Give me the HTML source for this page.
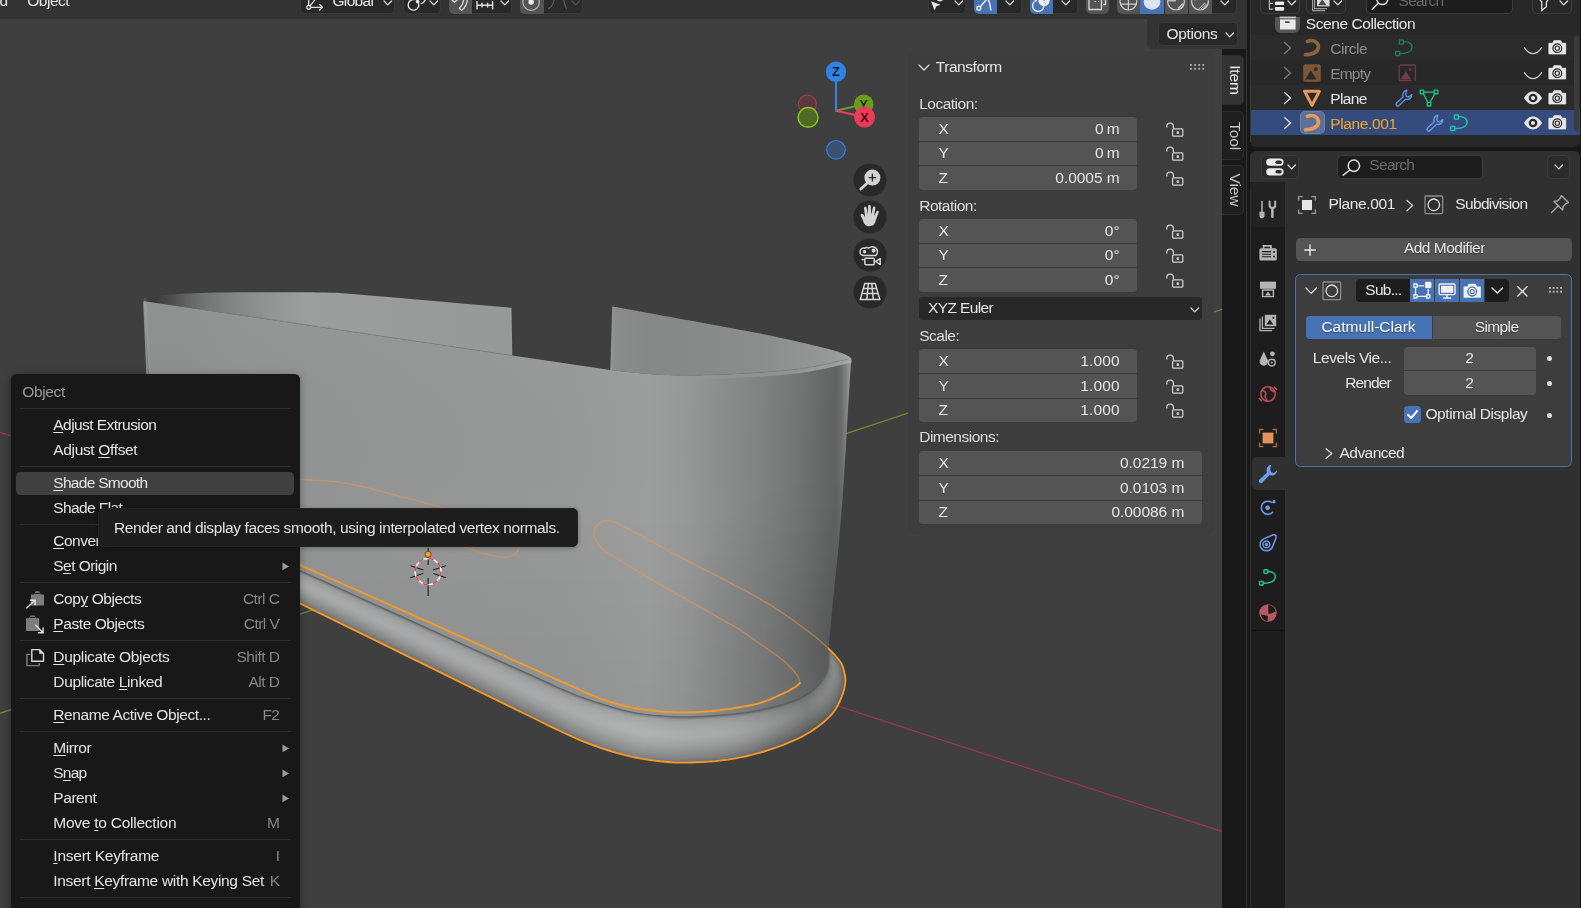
<!DOCTYPE html>
<html lang="en">
<head>
<meta charset="utf-8">
<title>Blender</title>
<style>
*{box-sizing:border-box;margin:0;padding:0}
html,body{width:1581px;height:908px;overflow:hidden;background:#181818}
body{position:relative;font-family:"Liberation Sans",sans-serif;font-size:15.5px;color:#e6e6e6;line-height:0}
.a{position:absolute;display:block}
.t{position:absolute;white-space:nowrap;line-height:0}
#all{position:absolute;left:0;top:0;width:1581px;height:908px;will-change:transform}
u{text-decoration:underline;text-underline-offset:1.5px;text-decoration-thickness:1px}
#vp{position:absolute;left:0;top:0;width:1222px;height:908px;background:#3f3f3f;overflow:hidden}
#scene{position:absolute;left:0;top:0}
</style>
</head>
<body>
<div id="all">
<div id="vp">
<svg id="scene" width="1222" height="908" viewBox="0 0 1222 908">
<defs>
<linearGradient id="gw" gradientUnits="userSpaceOnUse" x1="143" y1="0" x2="852" y2="0">

<stop offset="0.0000" stop-color="#8d8f8f"/>
<stop offset="0.0663" stop-color="#8d8f8f"/>
<stop offset="0.1509" stop-color="#919393"/>
<stop offset="0.3625" stop-color="#949696"/>
<stop offset="0.5882" stop-color="#979999"/>
<stop offset="0.7123" stop-color="#9d9f9f"/>
<stop offset="0.7645" stop-color="#979999"/>
<stop offset="0.8209" stop-color="#8b8d8d"/>
<stop offset="0.8773" stop-color="#7f8181"/>
<stop offset="0.9267" stop-color="#727474"/>
<stop offset="0.9633" stop-color="#646666"/>
<stop offset="0.9774" stop-color="#606262"/>
<stop offset="0.9859" stop-color="#6c6e6e"/>
<stop offset="0.9929" stop-color="#868888"/>
<stop offset="1.0000" stop-color="#a0a2a2"/>
</linearGradient>
<linearGradient id="gbl" gradientUnits="userSpaceOnUse" x1="144" y1="0" x2="512" y2="0">
<stop offset="0.0000" stop-color="#5a5a5a"/>
<stop offset="0.0109" stop-color="#3e3e3e"/>
<stop offset="0.0326" stop-color="#3b3b3b"/>
<stop offset="0.0652" stop-color="#494949"/>
<stop offset="0.1168" stop-color="#626363"/>
<stop offset="0.1685" stop-color="#747676"/>
<stop offset="0.2364" stop-color="#838585"/>
<stop offset="0.3043" stop-color="#8e9090"/>
<stop offset="0.3750" stop-color="#969898"/>
<stop offset="0.4429" stop-color="#9d9f9f"/>
<stop offset="0.5598" stop-color="#9c9e9e"/>
<stop offset="0.7500" stop-color="#999b9b"/>
<stop offset="1.0000" stop-color="#979999"/>
</linearGradient>
<linearGradient id="gbr" gradientUnits="userSpaceOnUse" x1="610" y1="0" x2="852" y2="0">
<stop offset="0.0000" stop-color="#969898"/>
<stop offset="0.0248" stop-color="#8a8c8c"/>
<stop offset="0.1653" stop-color="#868888"/>
<stop offset="0.3719" stop-color="#888a8a"/>
<stop offset="0.6198" stop-color="#8c8e8e"/>
<stop offset="0.8471" stop-color="#939595"/>
<stop offset="0.9504" stop-color="#9c9e9e"/>
<stop offset="0.9959" stop-color="#a6a8a8"/>
</linearGradient>
<linearGradient id="gfl" gradientUnits="userSpaceOnUse" x1="240" y1="0" x2="850" y2="0">
<stop offset="0" stop-color="#fff" stop-opacity="0"/>
<stop offset="0.50" stop-color="#fff" stop-opacity="0"/>
<stop offset="0.66" stop-color="#fff" stop-opacity="0.10"/>
<stop offset="0.75" stop-color="#fff" stop-opacity="0.02"/>
<stop offset="0.84" stop-color="#000" stop-opacity="0.06"/>
<stop offset="0.93" stop-color="#000" stop-opacity="0.25"/>
<stop offset="1" stop-color="#000" stop-opacity="0.15"/>
</linearGradient>
<linearGradient id="gwv" gradientUnits="userSpaceOnUse" x1="0" y1="300" x2="0" y2="720">
<stop offset="0" stop-color="#fff" stop-opacity="0.03"/>
<stop offset="0.5" stop-color="#000" stop-opacity="0"/>
<stop offset="1" stop-color="#000" stop-opacity="0.05"/>
</linearGradient>
<radialGradient id="gwd" gradientUnits="userSpaceOnUse" cx="835" cy="640" r="170">
<stop offset="0" stop-color="#000" stop-opacity="0.09"/>
<stop offset="0.5" stop-color="#000" stop-opacity="0.035"/>
<stop offset="1" stop-color="#000" stop-opacity="0"/>
</radialGradient>
<linearGradient id="grim" gradientUnits="userSpaceOnUse" x1="690" y1="0" x2="852" y2="0">
<stop offset="0" stop-color="#aaacac" stop-opacity="0"/>
<stop offset="0.45" stop-color="#aaacac" stop-opacity="0.35"/>
<stop offset="0.8" stop-color="#aeb0b0" stop-opacity="0.7"/>
<stop offset="1" stop-color="#b0b2b2" stop-opacity="0.8"/>
</linearGradient>
<clipPath id="cf"><path d="M240.0 543.7 L248.2 547.4 L254.4 550.1 L260.6 552.8 L268.8 556.4 L281.2 562.0 L299.9 570.4 L327.9 583.1 L364.3 599.5 L404.8 617.8 L445.4 636.2 L481.8 652.7 L510.0 665.4 L529.2 674.1 L542.7 680.3 L552.1 684.6 L558.9 687.7 L564.9 690.3 L571.7 693.2 L578.6 696.0 L584.3 698.1 L589.0 699.8 L593.4 701.2 L597.7 702.5 L602.5 704.0 L607.6 705.6 L612.8 707.2 L617.9 708.6 L623.0 710.0 L628.2 711.3 L633.3 712.4 L638.5 713.3 L643.8 714.1 L649.2 714.7 L654.4 715.2 L659.4 715.6 L664.1 716.0 L668.3 716.3 L672.0 716.6 L675.6 716.7 L679.1 716.8 L683.0 716.8 L687.3 716.8 L692.2 716.7 L697.6 716.4 L703.2 716.2 L708.9 715.8 L714.6 715.4 L720.0 715.0 L725.2 714.6 L730.2 714.1 L735.2 713.7 L740.1 713.1 L745.1 712.5 L750.0 711.7 L755.0 710.8 L760.2 709.7 L765.3 708.6 L770.4 707.4 L775.1 706.2 L779.5 705.0 L783.5 703.8 L787.2 702.7 L790.7 701.5 L793.9 700.3 L797.0 698.9 L800.0 697.5 L802.9 695.9 L805.6 694.3 L808.2 692.5 L810.6 690.7 L812.9 688.9 L815.0 687.0 L817.0 685.1 L819.0 683.1 L820.8 681.1 L822.4 679.1 L823.8 677.2 L825.0 675.3 L825.9 673.5 L826.6 671.8 L827.1 670.2 L827.5 668.6 L827.7 667.0 L828.0 665.4 L828.2 663.8 L828.3 662.2 L828.4 660.5 L828.4 659.0 L828.4 657.4 L828.4 656.0 L828.4 654.7 L828.5 653.4 L828.5 652.2 L828.5 651.0 L828.6 649.8 L828.6 648.6 L828.6 648.6 L830.0 650.1 L831.5 651.5 L832.9 653.0 L834.4 654.5 L835.7 656.0 L837.0 657.5 L838.2 659.0 L839.3 660.5 L840.4 662.0 L841.4 663.6 L842.3 665.4 L843.0 667.5 L843.7 669.9 L844.4 672.6 L844.9 675.4 L845.3 678.4 L845.3 681.6 L845.0 685.0 L844.2 688.7 L843.1 692.6 L841.6 696.8 L839.9 701.0 L838.0 704.9 L836.0 708.5 L833.8 711.7 L831.4 714.6 L828.9 717.3 L826.1 719.9 L823.2 722.5 L820.0 725.0 L816.7 727.5 L813.2 729.9 L809.6 732.2 L805.7 734.5 L801.5 736.8 L797.0 739.0 L792.1 741.2 L786.9 743.4 L781.3 745.6 L775.6 747.7 L769.8 749.7 L764.0 751.5 L758.2 753.2 L752.3 754.7 L746.2 756.2 L740.2 757.4 L734.1 758.6 L728.0 759.6 L721.8 760.4 L715.5 761.1 L709.2 761.6 L702.9 762.0 L696.8 762.3 L691.0 762.5 L685.5 762.6 L680.4 762.6 L675.4 762.5 L670.4 762.2 L665.3 761.8 L660.0 761.3 L654.4 760.6 L648.6 759.8 L642.8 758.9 L636.8 757.8 L630.9 756.6 L625.0 755.2 L619.1 753.6 L613.1 751.9 L607.2 750.0 L601.3 748.1 L595.5 746.0 L590.0 744.0 L585.0 742.1 L580.6 740.3 L576.2 738.5 L571.7 736.4 L566.4 734.0 L560.0 731.0 L554.0 728.2 L549.1 725.8 L543.4 723.0 L535.4 719.0 L523.1 713.0 L505.0 704.1 L477.8 690.8 L442.4 673.4 L402.8 653.9 L363.1 634.4 L327.4 616.9 L299.9 603.4 L281.5 594.4 L269.2 588.3 L260.9 584.2 L254.6 581.0 L248.3 577.9 L240.0 573.8Z"/></clipPath>
<filter id="bl05" x="-5%" y="-50%" width="110%" height="200%"><feGaussianBlur stdDeviation="0.7"/></filter>
<filter id="bl1" x="-5%" y="-5%" width="110%" height="110%"><feGaussianBlur stdDeviation="1.2"/></filter>
</defs>

<line x1="0" y1="432.3" x2="1222" y2="831.5" stroke="#96384a" stroke-width="1.3"/>
<line x1="0" y1="713.3" x2="1222" y2="309.4" stroke="#6a8c2d" stroke-width="1.3"/>
<path d="M143.2 300.5 L143.3 300.1 L143.3 299.7 L143.4 299.3 L143.5 298.9 L143.8 298.6 L144.2 298.3 L144.7 298.0 L145.2 297.7 L146.0 297.5 L147.0 297.2 L148.2 296.9 L149.6 296.7 L151.2 296.5 L153.0 296.2 L155.0 296.0 L157.2 295.8 L159.6 295.6 L162.2 295.3 L165.0 295.1 L168.0 294.9 L171.2 294.6 L174.7 294.4 L178.4 294.1 L182.2 293.8 L186.0 293.6 L189.8 293.4 L193.6 293.2 L197.5 293.1 L201.6 292.9 L205.9 292.8 L210.4 292.7 L215.1 292.6 L220.0 292.5 L225.0 292.5 L230.0 292.4 L234.8 292.3 L239.4 292.3 L244.2 292.3 L249.8 292.2 L256.5 292.2 L265.2 292.2 L275.4 292.2 L286.2 292.2 L296.5 292.2 L305.0 292.2 L311.7 292.3 L317.2 292.4 L321.8 292.5 L326.0 292.6 L330.0 292.7 L333.0 292.8 L334.8 292.8 L336.6 292.8 L339.6 293.0 L345.0 293.4 L352.5 294.0 L361.4 294.8 L372.0 295.7 L384.7 296.8 L400.0 298.1 L418.7 299.7 L440.5 301.6 L464.2 303.7 L488.3 305.8 L511.5 307.8 L512.3 355.6 L144.0 301.2Z" fill="url(#gbl)"/>
<path d="M612.2 306.4 L619.8 307.8 L627.5 309.2 L635.1 310.6 L642.6 312.0 L650.0 313.3 L657.1 314.6 L664.0 315.9 L670.8 317.1 L677.7 318.4 L685.0 319.7 L692.7 321.1 L700.7 322.6 L708.8 324.0 L717.0 325.5 L725.0 327.0 L733.1 328.5 L741.3 330.0 L749.4 331.5 L757.2 333.0 L764.5 334.4 L771.3 335.8 L777.7 337.2 L783.8 338.5 L789.6 339.8 L795.0 341.0 L800.1 342.2 L804.9 343.3 L809.3 344.3 L813.5 345.4 L817.4 346.3 L821.0 347.2 L824.4 348.0 L827.5 348.7 L830.3 349.5 L833.0 350.2 L835.4 350.9 L837.6 351.6 L839.6 352.3 L841.3 353.0 L843.0 353.6 L844.5 354.2 L845.9 354.8 L847.1 355.4 L848.1 356.0 L849.0 356.5 L849.7 357.0 L850.2 357.4 L850.6 357.8 L850.9 358.2 L851.3 358.6 L851.3 358.6 L849.5 359.0 L847.7 359.4 L845.9 359.7 L844.0 360.2 L842.0 360.6 L840.0 361.1 L837.9 361.6 L835.8 362.1 L833.4 362.7 L830.6 363.3 L827.4 364.0 L823.8 364.7 L820.0 365.5 L816.0 366.3 L812.0 367.0 L808.0 367.7 L804.0 368.3 L799.9 368.9 L795.6 369.5 L791.0 370.0 L786.1 370.5 L781.0 371.0 L775.7 371.4 L770.3 371.8 L765.0 372.2 L759.5 372.6 L753.8 373.0 L748.2 373.3 L742.8 373.6 L738.0 373.9 L733.8 374.1 L730.2 374.3 L726.8 374.4 L723.5 374.6 L720.0 374.7 L716.3 374.8 L712.6 374.9 L708.8 375.0 L704.9 375.1 L701.0 375.2 L696.9 375.3 L692.8 375.3 L688.5 375.3 L684.3 375.3 L680.0 375.3 L675.8 375.2 L671.6 375.2 L667.4 375.1 L663.1 374.9 L658.7 374.7 L654.1 374.4 L649.4 374.1 L644.7 373.7 L639.8 373.3 L635.0 372.8 L630.1 372.3 L625.2 371.7 L620.2 371.2 L615.3 370.6 L610.3 370.0Z" fill="url(#gbr)"/>
<path d="M144.0 301.2 L512.3 355.6 L610.3 370.0 L615.3 370.6 L620.2 371.2 L625.2 371.7 L630.1 372.3 L635.0 372.8 L639.8 373.3 L644.7 373.7 L649.4 374.1 L654.1 374.4 L658.7 374.7 L663.1 374.9 L667.4 375.1 L671.6 375.2 L675.8 375.2 L680.0 375.3 L684.3 375.3 L688.5 375.3 L692.8 375.3 L696.9 375.3 L701.0 375.2 L704.9 375.1 L708.8 375.0 L712.6 374.9 L716.3 374.8 L720.0 374.7 L723.5 374.6 L726.8 374.4 L730.2 374.3 L733.8 374.1 L738.0 373.9 L742.8 373.6 L748.2 373.3 L753.8 373.0 L759.5 372.6 L765.0 372.2 L770.3 371.8 L775.7 371.4 L781.0 371.0 L786.1 370.5 L791.0 370.0 L795.6 369.5 L799.9 368.9 L804.0 368.3 L808.0 367.7 L812.0 367.0 L816.0 366.3 L820.0 365.5 L823.8 364.7 L827.4 364.0 L830.6 363.3 L833.4 362.7 L835.8 362.1 L837.9 361.6 L840.0 361.1 L842.0 360.6 L844.0 360.2 L845.9 359.7 L847.7 359.4 L849.5 359.0 L851.3 358.6 L848.6 400.0 L845.7 450.0 L842.5 500.0 L838.2 550.0 L833.0 600.0 L828.6 648.6 L828.6 648.6 L828.6 649.8 L828.5 651.0 L828.5 652.2 L828.5 653.4 L828.4 654.7 L828.4 656.0 L828.4 657.4 L828.4 659.0 L828.4 660.5 L828.3 662.2 L828.2 663.8 L828.0 665.4 L827.7 667.0 L827.5 668.6 L827.1 670.2 L826.6 671.8 L825.9 673.5 L825.0 675.3 L823.8 677.2 L822.4 679.1 L820.8 681.1 L819.0 683.1 L817.0 685.1 L815.0 687.0 L812.9 688.9 L810.6 690.7 L808.2 692.5 L805.6 694.3 L802.9 695.9 L800.0 697.5 L797.0 698.9 L793.9 700.3 L790.7 701.5 L787.2 702.7 L783.5 703.8 L779.5 705.0 L775.1 706.2 L770.4 707.4 L765.3 708.6 L760.2 709.7 L755.0 710.8 L750.0 711.7 L745.1 712.5 L740.1 713.1 L735.2 713.7 L730.2 714.1 L725.2 714.6 L720.0 715.0 L714.6 715.4 L708.9 715.8 L703.2 716.2 L697.6 716.4 L692.2 716.7 L687.3 716.8 L683.0 716.8 L679.1 716.8 L675.6 716.7 L672.0 716.6 L668.3 716.3 L664.1 716.0 L659.4 715.6 L654.4 715.2 L649.2 714.7 L643.8 714.1 L638.5 713.3 L633.3 712.4 L628.2 711.3 L623.0 710.0 L617.9 708.6 L612.8 707.2 L607.6 705.6 L602.5 704.0 L597.7 702.5 L593.4 701.2 L589.0 699.8 L584.3 698.1 L578.6 696.0 L571.7 693.2 L564.9 690.3 L558.9 687.7 L552.1 684.6 L542.7 680.3 L529.2 674.1 L510.0 665.4 L481.8 652.7 L445.4 636.2 L404.8 617.8 L364.3 599.5 L327.9 583.1 L299.9 570.4 L281.2 562.0 L268.8 556.4 L260.6 552.8 L254.4 550.1 L248.2 547.4 L240.0 543.7 L160.0 543.7Z" fill="url(#gw)"/>
<path d="M144.0 301.2 L512.3 355.6 L610.3 370.0 L615.3 370.6 L620.2 371.2 L625.2 371.7 L630.1 372.3 L635.0 372.8 L639.8 373.3 L644.7 373.7 L649.4 374.1 L654.1 374.4 L658.7 374.7 L663.1 374.9 L667.4 375.1 L671.6 375.2 L675.8 375.2 L680.0 375.3 L684.3 375.3 L688.5 375.3 L692.8 375.3 L696.9 375.3 L701.0 375.2 L704.9 375.1 L708.8 375.0 L712.6 374.9 L716.3 374.8 L720.0 374.7 L723.5 374.6 L726.8 374.4 L730.2 374.3 L733.8 374.1 L738.0 373.9 L742.8 373.6 L748.2 373.3 L753.8 373.0 L759.5 372.6 L765.0 372.2 L770.3 371.8 L775.7 371.4 L781.0 371.0 L786.1 370.5 L791.0 370.0 L795.6 369.5 L799.9 368.9 L804.0 368.3 L808.0 367.7 L812.0 367.0 L816.0 366.3 L820.0 365.5 L823.8 364.7 L827.4 364.0 L830.6 363.3 L833.4 362.7 L835.8 362.1 L837.9 361.6 L840.0 361.1 L842.0 360.6 L844.0 360.2 L845.9 359.7 L847.7 359.4 L849.5 359.0 L851.3 358.6 L848.6 400.0 L845.7 450.0 L842.5 500.0 L838.2 550.0 L833.0 600.0 L828.6 648.6 L828.6 648.6 L828.6 649.8 L828.5 651.0 L828.5 652.2 L828.5 653.4 L828.4 654.7 L828.4 656.0 L828.4 657.4 L828.4 659.0 L828.4 660.5 L828.3 662.2 L828.2 663.8 L828.0 665.4 L827.7 667.0 L827.5 668.6 L827.1 670.2 L826.6 671.8 L825.9 673.5 L825.0 675.3 L823.8 677.2 L822.4 679.1 L820.8 681.1 L819.0 683.1 L817.0 685.1 L815.0 687.0 L812.9 688.9 L810.6 690.7 L808.2 692.5 L805.6 694.3 L802.9 695.9 L800.0 697.5 L797.0 698.9 L793.9 700.3 L790.7 701.5 L787.2 702.7 L783.5 703.8 L779.5 705.0 L775.1 706.2 L770.4 707.4 L765.3 708.6 L760.2 709.7 L755.0 710.8 L750.0 711.7 L745.1 712.5 L740.1 713.1 L735.2 713.7 L730.2 714.1 L725.2 714.6 L720.0 715.0 L714.6 715.4 L708.9 715.8 L703.2 716.2 L697.6 716.4 L692.2 716.7 L687.3 716.8 L683.0 716.8 L679.1 716.8 L675.6 716.7 L672.0 716.6 L668.3 716.3 L664.1 716.0 L659.4 715.6 L654.4 715.2 L649.2 714.7 L643.8 714.1 L638.5 713.3 L633.3 712.4 L628.2 711.3 L623.0 710.0 L617.9 708.6 L612.8 707.2 L607.6 705.6 L602.5 704.0 L597.7 702.5 L593.4 701.2 L589.0 699.8 L584.3 698.1 L578.6 696.0 L571.7 693.2 L564.9 690.3 L558.9 687.7 L552.1 684.6 L542.7 680.3 L529.2 674.1 L510.0 665.4 L481.8 652.7 L445.4 636.2 L404.8 617.8 L364.3 599.5 L327.9 583.1 L299.9 570.4 L281.2 562.0 L268.8 556.4 L260.6 552.8 L254.4 550.1 L248.2 547.4 L240.0 543.7 L160.0 543.7Z" fill="url(#gwv)"/>
<path d="M144.0 301.2 L512.3 355.6 L610.3 370.0 L615.3 370.6 L620.2 371.2 L625.2 371.7 L630.1 372.3 L635.0 372.8 L639.8 373.3 L644.7 373.7 L649.4 374.1 L654.1 374.4 L658.7 374.7 L663.1 374.9 L667.4 375.1 L671.6 375.2 L675.8 375.2 L680.0 375.3 L684.3 375.3 L688.5 375.3 L692.8 375.3 L696.9 375.3 L701.0 375.2 L704.9 375.1 L708.8 375.0 L712.6 374.9 L716.3 374.8 L720.0 374.7 L723.5 374.6 L726.8 374.4 L730.2 374.3 L733.8 374.1 L738.0 373.9 L742.8 373.6 L748.2 373.3 L753.8 373.0 L759.5 372.6 L765.0 372.2 L770.3 371.8 L775.7 371.4 L781.0 371.0 L786.1 370.5 L791.0 370.0 L795.6 369.5 L799.9 368.9 L804.0 368.3 L808.0 367.7 L812.0 367.0 L816.0 366.3 L820.0 365.5 L823.8 364.7 L827.4 364.0 L830.6 363.3 L833.4 362.7 L835.8 362.1 L837.9 361.6 L840.0 361.1 L842.0 360.6 L844.0 360.2 L845.9 359.7 L847.7 359.4 L849.5 359.0 L851.3 358.6 L848.6 400.0 L845.7 450.0 L842.5 500.0 L838.2 550.0 L833.0 600.0 L828.6 648.6 L828.6 648.6 L828.6 649.8 L828.5 651.0 L828.5 652.2 L828.5 653.4 L828.4 654.7 L828.4 656.0 L828.4 657.4 L828.4 659.0 L828.4 660.5 L828.3 662.2 L828.2 663.8 L828.0 665.4 L827.7 667.0 L827.5 668.6 L827.1 670.2 L826.6 671.8 L825.9 673.5 L825.0 675.3 L823.8 677.2 L822.4 679.1 L820.8 681.1 L819.0 683.1 L817.0 685.1 L815.0 687.0 L812.9 688.9 L810.6 690.7 L808.2 692.5 L805.6 694.3 L802.9 695.9 L800.0 697.5 L797.0 698.9 L793.9 700.3 L790.7 701.5 L787.2 702.7 L783.5 703.8 L779.5 705.0 L775.1 706.2 L770.4 707.4 L765.3 708.6 L760.2 709.7 L755.0 710.8 L750.0 711.7 L745.1 712.5 L740.1 713.1 L735.2 713.7 L730.2 714.1 L725.2 714.6 L720.0 715.0 L714.6 715.4 L708.9 715.8 L703.2 716.2 L697.6 716.4 L692.2 716.7 L687.3 716.8 L683.0 716.8 L679.1 716.8 L675.6 716.7 L672.0 716.6 L668.3 716.3 L664.1 716.0 L659.4 715.6 L654.4 715.2 L649.2 714.7 L643.8 714.1 L638.5 713.3 L633.3 712.4 L628.2 711.3 L623.0 710.0 L617.9 708.6 L612.8 707.2 L607.6 705.6 L602.5 704.0 L597.7 702.5 L593.4 701.2 L589.0 699.8 L584.3 698.1 L578.6 696.0 L571.7 693.2 L564.9 690.3 L558.9 687.7 L552.1 684.6 L542.7 680.3 L529.2 674.1 L510.0 665.4 L481.8 652.7 L445.4 636.2 L404.8 617.8 L364.3 599.5 L327.9 583.1 L299.9 570.4 L281.2 562.0 L268.8 556.4 L260.6 552.8 L254.4 550.1 L248.2 547.4 L240.0 543.7 L160.0 543.7Z" fill="url(#gwd)"/>
<path d="M701.0 377.1 L704.9 377.0 L708.8 376.9 L712.6 376.8 L716.3 376.7 L720.0 376.6 L723.5 376.5 L726.8 376.3 L730.2 376.2 L733.8 376.0 L738.0 375.8 L742.8 375.5 L748.2 375.2 L753.8 374.9 L759.5 374.5 L765.0 374.1 L770.3 373.7 L775.7 373.3 L781.0 372.9 L786.1 372.4 L791.0 371.9 L795.6 371.4 L799.9 370.8 L804.0 370.2 L808.0 369.6 L812.0 368.9 L816.0 368.2 L820.0 367.4 L823.8 366.6 L827.4 365.9 L830.6 365.2 L833.4 364.6 L835.8 364.0 L837.9 363.5 L840.0 363.0 L842.0 362.5 L844.0 362.1 L845.9 361.6 L847.7 361.3 L849.5 360.9 L851.3 360.5" fill="none" stroke="url(#grim)" stroke-width="4.2" filter="url(#bl05)"/>
<path d="M675.8 375.0 L680.0 375.1 L684.3 375.1 L688.5 375.1 L692.8 375.1 L696.9 375.1 L701.0 375.0 L704.9 374.9 L708.8 374.8 L712.6 374.7 L716.3 374.6 L720.0 374.5 L723.5 374.4 L726.8 374.2 L730.2 374.1 L733.8 373.9 L738.0 373.7 L742.8 373.4 L748.2 373.1 L753.8 372.8 L759.5 372.4 L765.0 372.0 L770.3 371.6 L775.7 371.2 L781.0 370.8 L786.1 370.3 L791.0 369.8 L795.6 369.3 L799.9 368.7 L804.0 368.1 L808.0 367.5 L812.0 366.8 L816.0 366.1 L820.0 365.3 L823.8 364.5 L827.4 363.8 L830.6 363.1 L833.4 362.5 L835.8 361.9 L837.9 361.4 L840.0 360.9 L842.0 360.4 L844.0 360.0 L845.9 359.5 L847.7 359.2" fill="none" stroke="#7a7c7c" stroke-width="0.8" opacity="0.7"/>
<path d="M200 308.800 L512.3 355.6" fill="none" stroke="#7c7e7e" stroke-width="0.8" opacity="0.8"/>
<path d="M144.8 301.5L148.1 374L157.2 560" fill="none" stroke="#a8aaaa" stroke-width="3.6" opacity=".4"/><path d="M144 301.5L147.2 374L156.3 560" fill="none" stroke="#a8aaaa" stroke-width="1.6" opacity=".6"/>
<g clip-path="url(#cf)"><g filter="url(#bl1)">
<path d="M240.0 543.7 L248.2 547.4 L254.4 550.1 L260.6 552.8 L268.8 556.4 L281.2 562.0 L299.9 570.4 L327.9 583.1 L364.3 599.5 L404.8 617.8 L445.4 636.2 L481.8 652.7 L510.0 665.4 L529.2 674.1 L542.7 680.3 L552.1 684.6 L558.9 687.7 L564.9 690.3 L571.7 693.2 L578.6 696.0 L584.3 698.1 L589.0 699.8 L593.4 701.2 L597.7 702.5 L602.5 704.0 L607.6 705.6 L612.8 707.2 L617.9 708.6 L623.0 710.0 L628.2 711.3 L633.3 712.4 L638.5 713.3 L643.8 714.1 L649.2 714.7 L654.4 715.2 L659.4 715.6 L664.1 716.0 L668.3 716.3 L672.0 716.6 L675.6 716.7 L679.1 716.8 L683.0 716.8 L687.3 716.8 L692.2 716.7 L697.6 716.4 L703.2 716.2 L708.9 715.8 L714.6 715.4 L720.0 715.0 L725.2 714.6 L730.2 714.1 L735.2 713.7 L740.1 713.1 L745.1 712.5 L750.0 711.7 L755.0 710.8 L760.2 709.7 L765.3 708.6 L770.4 707.4 L775.1 706.2 L779.5 705.0 L783.5 703.8 L787.2 702.7 L790.7 701.5 L793.9 700.3 L797.0 698.9 L800.0 697.5 L802.9 695.9 L805.6 694.3 L808.2 692.5 L810.6 690.7 L812.9 688.9 L815.0 687.0 L817.0 685.1 L819.0 683.1 L820.8 681.1 L822.4 679.1 L823.8 677.2 L825.0 675.3 L825.9 673.5 L826.6 671.8 L827.1 670.2 L827.5 668.6 L827.7 667.0 L828.0 665.4 L828.2 663.8 L828.3 662.2 L828.4 660.5 L828.4 659.0 L828.4 657.4 L828.4 656.0 L828.4 654.7 L828.5 653.4 L828.5 652.2 L828.5 651.0 L828.6 649.8 L828.6 648.6 L828.6 648.6 L828.7 649.8 L828.8 651.0 L828.9 652.2 L829.0 653.5 L829.1 654.8 L829.2 656.1 L829.3 657.6 L829.4 659.1 L829.5 660.7 L829.5 662.3 L829.5 663.9 L829.4 665.6 L829.2 667.3 L829.0 669.0 L828.7 670.7 L828.3 672.5 L827.7 674.3 L826.8 676.2 L825.7 678.2 L824.3 680.3 L822.7 682.5 L820.9 684.8 L819.0 686.9 L816.9 689.0 L814.8 690.9 L812.5 692.9 L810.1 694.8 L807.5 696.6 L804.7 698.4 L801.8 700.0 L798.8 701.5 L795.7 703.0 L792.4 704.3 L788.9 705.6 L785.1 706.8 L781.1 708.1 L776.7 709.4 L771.9 710.7 L766.8 712.0 L761.6 713.2 L756.4 714.3 L751.3 715.3 L746.3 716.2 L741.2 716.9 L736.2 717.5 L731.1 718.1 L726.0 718.6 L720.7 719.1 L715.3 719.5 L709.5 719.9 L703.8 720.3 L698.1 720.6 L692.7 720.8 L687.6 721.0 L683.2 721.0 L679.3 721.0 L675.6 720.9 L671.9 720.7 L668.0 720.5 L663.7 720.1 L658.9 719.7 L653.9 719.3 L648.6 718.7 L643.2 718.1 L637.8 717.3 L632.5 716.3 L627.3 715.2 L622.1 713.9 L616.9 712.4 L611.7 710.9 L606.5 709.3 L601.4 707.7 L596.6 706.2 L592.2 704.8 L587.9 703.3 L583.1 701.6 L577.5 699.5 L570.6 696.7 L563.9 693.8 L558.0 691.2 L551.3 688.1 L542.0 683.8 L528.7 677.7 L509.5 668.9 L481.5 656.1 L445.1 639.6 L404.6 621.1 L364.2 602.7 L327.9 586.2 L299.9 573.4 L281.3 565.0 L268.8 559.4 L260.6 555.6 L254.4 552.9 L248.3 550.2 L240.0 546.5Z" fill="#787a7a"/>
<path d="M240.0 545.2 L248.2 548.9 L254.4 551.7 L260.6 554.4 L268.8 558.1 L281.2 563.7 L299.9 572.1 L327.9 584.8 L364.2 601.3 L404.7 619.7 L445.2 638.1 L481.6 654.6 L509.7 667.4 L528.9 676.1 L542.3 682.3 L551.6 686.5 L558.4 689.6 L564.4 692.3 L571.1 695.1 L578.0 698.0 L583.6 700.1 L588.4 701.8 L592.7 703.2 L597.1 704.6 L601.9 706.1 L607.0 707.7 L612.2 709.3 L617.3 710.8 L622.5 712.2 L627.7 713.5 L632.9 714.6 L638.1 715.5 L643.5 716.3 L648.8 716.9 L654.1 717.5 L659.1 717.9 L663.9 718.3 L668.1 718.7 L672.0 718.9 L675.6 719.1 L679.2 719.2 L683.1 719.2 L687.5 719.2 L692.5 719.0 L697.9 718.8 L703.5 718.5 L709.3 718.1 L715.0 717.7 L720.4 717.3 L725.6 716.8 L730.7 716.4 L735.8 715.8 L740.8 715.2 L745.7 714.6 L750.7 713.7 L755.8 712.8 L761.0 711.7 L766.2 710.5 L771.2 709.3 L776.0 708.0 L780.4 706.7 L784.4 705.5 L788.2 704.3 L791.6 703.1 L794.9 701.8 L798.0 700.4 L801.0 698.9 L803.9 697.3 L806.6 695.6 L809.2 693.8 L811.6 691.9 L813.9 690.0 L816.1 688.1 L818.1 686.1 L820.0 684.0 L821.8 681.9 L823.4 679.8 L824.8 677.8 L826.0 675.8 L826.9 674.0 L827.6 672.2 L828.0 670.5 L828.3 668.8 L828.6 667.2 L828.8 665.5 L828.9 663.9 L829.0 662.2 L829.0 660.6 L828.9 659.0 L828.9 657.5 L828.8 656.1 L828.8 654.7 L828.8 653.4 L828.7 652.2 L828.7 651.0 L828.6 649.8 L828.6 648.6 L828.6 648.6 L828.8 649.9 L829.0 651.1 L829.2 652.3 L829.4 653.6 L829.6 654.9 L829.8 656.2 L830.0 657.7 L830.2 659.2 L830.3 660.8 L830.5 662.4 L830.5 664.0 L830.4 665.7 L830.3 667.5 L830.2 669.2 L830.0 671.1 L829.7 672.9 L829.1 674.9 L828.3 676.9 L827.1 679.0 L825.7 681.3 L824.1 683.7 L822.4 686.0 L820.5 688.3 L818.4 690.5 L816.3 692.6 L814.0 694.6 L811.5 696.6 L808.9 698.4 L806.2 700.3 L803.3 702.0 L800.2 703.6 L797.1 705.1 L793.7 706.5 L790.2 707.9 L786.4 709.2 L782.4 710.5 L777.9 711.9 L773.0 713.3 L767.9 714.6 L762.7 715.9 L757.5 717.1 L752.3 718.2 L747.2 719.1 L742.1 719.9 L737.0 720.6 L731.8 721.2 L726.6 721.7 L721.3 722.3 L715.8 722.7 L710.0 723.2 L704.2 723.6 L698.5 723.9 L693.0 724.1 L687.9 724.2 L683.4 724.3 L679.3 724.3 L675.5 724.2 L671.8 724.0 L667.8 723.7 L663.4 723.4 L658.6 722.9 L653.5 722.5 L648.1 721.9 L642.7 721.2 L637.3 720.4 L631.9 719.4 L626.7 718.2 L621.4 716.9 L616.2 715.4 L610.9 713.8 L605.7 712.2 L600.5 710.5 L595.7 709.0 L591.3 707.6 L586.9 706.1 L582.2 704.4 L576.6 702.2 L569.8 699.4 L563.1 696.5 L557.3 693.9 L550.7 690.8 L541.5 686.6 L528.2 680.5 L509.2 671.7 L481.2 658.9 L444.9 642.2 L404.5 623.7 L364.1 605.2 L327.9 588.6 L299.9 575.8 L281.3 567.3 L268.9 561.6 L260.6 557.9 L254.4 555.1 L248.3 552.3 L240.0 548.6Z" fill="#999b9b"/>
<path d="M240.0 547.4 L248.3 551.1 L254.4 553.9 L260.6 556.6 L268.9 560.4 L281.3 566.0 L299.9 574.5 L327.9 587.2 L364.2 603.8 L404.6 622.3 L445.0 640.7 L481.3 657.3 L509.4 670.2 L528.5 678.9 L541.8 685.0 L551.0 689.3 L557.7 692.4 L563.6 695.0 L570.3 697.8 L577.1 700.7 L582.7 702.9 L587.5 704.6 L591.8 706.0 L596.2 707.4 L601.0 708.9 L606.1 710.6 L611.4 712.2 L616.6 713.7 L621.8 715.2 L627.1 716.5 L632.3 717.7 L637.6 718.6 L643.0 719.4 L648.4 720.1 L653.7 720.7 L658.8 721.1 L663.6 721.6 L667.9 721.9 L671.8 722.2 L675.6 722.4 L679.3 722.5 L683.3 722.5 L687.8 722.4 L692.8 722.3 L698.3 722.0 L704.0 721.7 L709.8 721.4 L715.5 720.9 L721.0 720.5 L726.3 720.0 L731.4 719.5 L736.6 718.9 L741.6 718.2 L746.7 717.5 L751.7 716.6 L756.9 715.6 L762.1 714.4 L767.3 713.2 L772.4 711.8 L777.2 710.5 L781.6 709.2 L785.7 707.9 L789.5 706.6 L793.0 705.3 L796.3 703.9 L799.4 702.4 L802.5 700.9 L805.4 699.2 L808.1 697.4 L810.7 695.6 L813.1 693.6 L815.4 691.7 L817.6 689.6 L819.6 687.5 L821.5 685.3 L823.3 683.0 L824.9 680.8 L826.3 678.6 L827.5 676.5 L828.3 674.5 L828.9 672.7 L829.3 670.8 L829.5 669.1 L829.7 667.4 L829.8 665.7 L829.9 664.0 L829.9 662.3 L829.9 660.7 L829.7 659.2 L829.6 657.6 L829.5 656.2 L829.3 654.8 L829.2 653.5 L829.1 652.3 L828.9 651.1 L828.7 649.8 L828.6 648.6 L828.6 648.6 L828.9 649.9 L829.2 651.1 L829.6 652.4 L829.9 653.6 L830.2 655.0 L830.4 656.4 L830.7 657.8 L830.9 659.3 L831.2 660.9 L831.4 662.5 L831.5 664.2 L831.5 665.9 L831.5 667.7 L831.4 669.5 L831.3 671.4 L831.0 673.4 L830.5 675.4 L829.7 677.6 L828.6 679.9 L827.2 682.3 L825.6 684.8 L823.9 687.3 L822.0 689.7 L819.9 692.0 L817.8 694.2 L815.5 696.3 L813.0 698.3 L810.4 700.3 L807.6 702.2 L804.7 703.9 L801.6 705.6 L798.4 707.2 L795.1 708.7 L791.5 710.1 L787.7 711.6 L783.6 713.0 L779.1 714.4 L774.2 715.9 L769.1 717.3 L763.8 718.6 L758.5 719.9 L753.3 721.0 L748.1 722.0 L743.0 722.9 L737.8 723.6 L732.6 724.3 L727.3 724.9 L721.9 725.4 L716.3 726.0 L710.5 726.4 L704.6 726.8 L698.8 727.1 L693.3 727.4 L688.2 727.5 L683.6 727.6 L679.4 727.5 L675.5 727.5 L671.7 727.3 L667.6 727.0 L663.1 726.6 L658.2 726.2 L653.0 725.6 L647.7 725.0 L642.2 724.3 L636.7 723.4 L631.4 722.4 L626.0 721.2 L620.7 719.9 L615.4 718.3 L610.1 716.7 L604.8 715.1 L599.6 713.4 L594.7 711.8 L590.4 710.4 L586.0 708.9 L581.3 707.1 L575.8 704.9 L569.0 702.1 L562.4 699.2 L556.6 696.6 L550.0 693.6 L541.0 689.4 L527.8 683.2 L508.8 674.5 L480.9 661.6 L444.7 644.9 L404.3 626.3 L364.0 607.7 L327.8 591.0 L299.9 578.1 L281.3 569.6 L268.9 563.9 L260.6 560.1 L254.4 557.3 L248.3 554.5 L240.0 550.8Z" fill="#9ea0a0"/>
<path d="M240.0 549.5 L248.3 553.3 L254.4 556.1 L260.6 558.9 L268.9 562.6 L281.3 568.3 L299.9 576.8 L327.8 589.6 L364.1 606.3 L404.4 624.8 L444.8 643.4 L481.1 660.1 L509.0 672.9 L528.0 681.7 L541.3 687.8 L550.4 692.0 L557.0 695.1 L562.8 697.7 L569.4 700.5 L576.2 703.4 L581.8 705.6 L586.5 707.3 L590.9 708.8 L595.3 710.2 L600.1 711.8 L605.3 713.5 L610.5 715.1 L615.8 716.7 L621.1 718.2 L626.4 719.5 L631.7 720.7 L637.0 721.7 L642.5 722.6 L647.9 723.3 L653.3 723.9 L658.4 724.4 L663.3 724.8 L667.7 725.2 L671.7 725.4 L675.5 725.6 L679.4 725.7 L683.5 725.7 L688.0 725.7 L693.1 725.5 L698.6 725.3 L704.4 725.0 L710.2 724.6 L716.0 724.2 L721.6 723.7 L726.9 723.1 L732.2 722.6 L737.3 721.9 L742.5 721.2 L747.6 720.4 L752.7 719.4 L757.9 718.3 L763.2 717.1 L768.4 715.8 L773.6 714.4 L778.4 713.0 L782.9 711.6 L787.0 710.2 L790.8 708.9 L794.3 707.5 L797.7 706.0 L800.8 704.5 L803.9 702.8 L806.8 701.1 L809.6 699.3 L812.2 697.3 L814.6 695.3 L816.9 693.3 L819.1 691.2 L821.1 688.9 L823.0 686.6 L824.8 684.2 L826.4 681.7 L827.8 679.4 L828.9 677.2 L829.7 675.1 L830.2 673.1 L830.6 671.2 L830.7 669.4 L830.8 667.6 L830.9 665.8 L830.9 664.1 L830.9 662.4 L830.7 660.8 L830.5 659.3 L830.3 657.8 L830.1 656.3 L829.9 654.9 L829.6 653.6 L829.4 652.3 L829.1 651.1 L828.9 649.9 L828.6 648.6 L828.6 648.6 L829.0 649.9 L829.4 651.2 L829.9 652.4 L830.3 653.7 L830.7 655.0 L831.0 656.5 L831.4 657.9 L831.7 659.4 L832.1 661.0 L832.3 662.6 L832.5 664.3 L832.6 666.0 L832.6 667.9 L832.6 669.8 L832.6 671.8 L832.3 673.9 L831.9 676.0 L831.1 678.3 L830.0 680.7 L828.7 683.2 L827.1 685.9 L825.4 688.6 L823.5 691.2 L821.4 693.6 L819.3 695.8 L817.0 698.0 L814.5 700.1 L811.9 702.1 L809.1 704.1 L806.1 705.9 L803.0 707.7 L799.8 709.3 L796.4 710.9 L792.8 712.4 L789.0 713.9 L784.9 715.4 L780.3 716.9 L775.4 718.4 L770.2 719.9 L764.9 721.4 L759.6 722.7 L754.3 723.9 L749.1 724.9 L743.8 725.8 L738.6 726.6 L733.3 727.4 L727.9 728.0 L722.4 728.6 L716.8 729.2 L711.0 729.7 L705.0 730.1 L699.2 730.4 L693.6 730.6 L688.4 730.8 L683.8 730.8 L679.5 730.8 L675.5 730.7 L671.5 730.5 L667.4 730.2 L662.8 729.8 L657.9 729.4 L652.6 728.8 L647.2 728.2 L641.7 727.4 L636.2 726.5 L630.8 725.5 L625.4 724.3 L620.0 722.8 L614.6 721.3 L609.3 719.7 L603.9 718.0 L598.7 716.2 L593.8 714.6 L589.5 713.2 L585.1 711.6 L580.4 709.9 L574.9 707.6 L568.1 704.8 L561.6 701.9 L555.9 699.3 L549.4 696.3 L540.5 692.1 L527.4 686.0 L508.5 677.2 L480.6 664.3 L444.5 647.5 L404.2 628.9 L363.9 610.2 L327.8 593.4 L299.9 580.5 L281.3 571.9 L268.9 566.2 L260.7 562.4 L254.5 559.5 L248.3 556.7 L240.0 552.9Z" fill="#a3a5a5"/>
<path d="M240.0 551.7 L248.3 555.5 L254.5 558.3 L260.6 561.1 L268.9 564.9 L281.3 570.6 L299.9 579.2 L327.8 592.1 L364.0 608.8 L404.3 627.4 L444.6 646.1 L480.8 662.8 L508.7 675.7 L527.6 684.5 L540.8 690.6 L549.8 694.8 L556.3 697.8 L562.0 700.4 L568.6 703.2 L575.4 706.1 L580.9 708.3 L585.6 710.1 L590.0 711.6 L594.3 713.0 L599.2 714.6 L604.4 716.3 L609.7 718.0 L615.1 719.6 L620.4 721.2 L625.8 722.6 L631.1 723.8 L636.5 724.8 L642.0 725.7 L647.5 726.4 L652.9 727.0 L658.1 727.6 L663.0 728.0 L667.5 728.4 L671.6 728.7 L675.5 728.9 L679.5 729.0 L683.7 729.0 L688.3 728.9 L693.5 728.8 L699.0 728.6 L704.8 728.2 L710.7 727.8 L716.5 727.4 L722.1 726.9 L727.5 726.3 L732.9 725.6 L738.1 724.9 L743.4 724.2 L748.5 723.3 L753.7 722.3 L759.0 721.1 L764.3 719.8 L769.6 718.4 L774.7 717.0 L779.6 715.5 L784.1 714.0 L788.3 712.6 L792.1 711.1 L795.7 709.7 L799.0 708.1 L802.2 706.5 L805.3 704.8 L808.3 703.0 L811.0 701.1 L813.7 699.1 L816.1 697.1 L818.4 694.9 L820.6 692.7 L822.6 690.4 L824.5 687.9 L826.3 685.3 L827.9 682.7 L829.2 680.2 L830.3 677.9 L831.1 675.7 L831.6 673.6 L831.8 671.6 L831.9 669.6 L832.0 667.8 L832.0 666.0 L832.0 664.2 L831.8 662.5 L831.6 660.9 L831.3 659.4 L831.0 657.9 L830.7 656.4 L830.4 655.0 L830.0 653.7 L829.7 652.4 L829.3 651.1 L829.0 649.9 L828.6 648.6 L828.6 648.6 L829.1 649.9 L829.7 651.2 L830.2 652.5 L830.7 653.8 L831.2 655.1 L831.6 656.6 L832.1 658.0 L832.5 659.5 L832.9 661.1 L833.3 662.7 L833.5 664.4 L833.7 666.2 L833.8 668.1 L833.8 670.1 L833.8 672.2 L833.7 674.3 L833.3 676.6 L832.5 679.0 L831.5 681.5 L830.2 684.2 L828.6 687.0 L826.9 689.9 L825.0 692.6 L822.9 695.1 L820.8 697.5 L818.4 699.7 L816.0 701.9 L813.3 704.0 L810.5 705.9 L807.5 707.9 L804.4 709.7 L801.2 711.4 L797.8 713.1 L794.2 714.7 L790.3 716.3 L786.1 717.8 L781.5 719.4 L776.6 721.0 L771.4 722.6 L766.0 724.1 L760.6 725.5 L755.3 726.7 L750.0 727.8 L744.7 728.8 L739.4 729.7 L734.0 730.5 L728.5 731.2 L723.0 731.8 L717.3 732.4 L711.4 732.9 L705.5 733.3 L699.6 733.6 L694.0 733.9 L688.7 734.0 L683.9 734.1 L679.6 734.1 L675.5 734.0 L671.4 733.8 L667.2 733.5 L662.6 733.1 L657.5 732.6 L652.2 732.0 L646.8 731.3 L641.2 730.6 L635.6 729.6 L630.2 728.5 L624.8 727.3 L619.3 725.8 L613.9 724.3 L608.4 722.6 L603.1 720.8 L597.8 719.1 L592.9 717.5 L588.5 716.0 L584.2 714.4 L579.5 712.6 L574.0 710.3 L567.3 707.5 L560.8 704.6 L555.2 702.1 L548.8 699.1 L539.9 694.9 L526.9 688.8 L508.1 680.0 L480.3 667.0 L444.3 650.2 L404.1 631.4 L363.8 612.7 L327.7 595.8 L299.9 582.8 L281.3 574.2 L268.9 568.4 L260.7 564.6 L254.5 561.7 L248.3 558.9 L240.0 555.1Z" fill="#a6a8a8"/>
<path d="M240.0 553.8 L248.3 557.7 L254.5 560.5 L260.7 563.4 L268.9 567.2 L281.3 572.9 L299.9 581.5 L327.8 594.5 L363.9 611.3 L404.1 630.0 L444.4 648.7 L480.5 665.5 L508.3 678.4 L527.2 687.2 L540.2 693.3 L549.2 697.5 L555.6 700.5 L561.2 703.1 L567.8 705.9 L574.5 708.8 L580.0 711.1 L584.7 712.8 L589.1 714.4 L593.4 715.9 L598.3 717.5 L603.6 719.2 L608.9 720.9 L614.3 722.6 L619.7 724.2 L625.1 725.6 L630.5 726.8 L635.9 727.9 L641.5 728.8 L647.0 729.6 L652.5 730.2 L657.7 730.8 L662.7 731.3 L667.3 731.7 L671.5 732.0 L675.5 732.2 L679.6 732.3 L683.8 732.3 L688.5 732.2 L693.8 732.1 L699.4 731.8 L705.2 731.5 L711.2 731.1 L717.0 730.6 L722.7 730.0 L728.2 729.4 L733.6 728.7 L738.9 728.0 L744.2 727.1 L749.5 726.2 L754.7 725.1 L760.0 723.9 L765.4 722.5 L770.7 721.1 L775.9 719.6 L780.8 718.0 L785.4 716.5 L789.6 714.9 L793.4 713.4 L797.0 711.9 L800.4 710.3 L803.6 708.6 L806.7 706.8 L809.7 704.9 L812.5 702.9 L815.1 700.9 L817.6 698.8 L819.9 696.6 L822.1 694.2 L824.1 691.8 L826.0 689.1 L827.8 686.4 L829.4 683.7 L830.7 681.0 L831.7 678.6 L832.5 676.3 L832.9 674.1 L833.1 672.0 L833.2 669.9 L833.1 668.0 L833.1 666.1 L833.0 664.3 L832.7 662.6 L832.4 661.0 L832.1 659.5 L831.7 658.0 L831.3 656.5 L830.9 655.1 L830.5 653.7 L830.0 652.4 L829.5 651.2 L829.1 649.9 L828.6 648.6 L828.6 648.6 L829.2 649.9 L829.9 651.2 L830.5 652.5 L831.1 653.9 L831.7 655.2 L832.3 656.7 L832.8 658.1 L833.3 659.6 L833.8 661.2 L834.2 662.8 L834.5 664.5 L834.7 666.3 L834.9 668.3 L835.0 670.4 L835.1 672.5 L835.0 674.8 L834.6 677.2 L834.0 679.7 L833.0 682.3 L831.7 685.2 L830.1 688.2 L828.4 691.1 L826.5 694.0 L824.4 696.6 L822.3 699.1 L819.9 701.4 L817.5 703.7 L814.8 705.8 L812.0 707.8 L809.0 709.8 L805.8 711.7 L802.6 713.6 L799.1 715.3 L795.5 717.0 L791.6 718.6 L787.4 720.3 L782.7 721.9 L777.8 723.6 L772.5 725.2 L767.1 726.8 L761.7 728.2 L756.3 729.6 L750.9 730.7 L745.6 731.8 L740.2 732.7 L734.7 733.6 L729.2 734.3 L723.6 735.0 L717.8 735.6 L711.9 736.1 L705.9 736.6 L700.0 736.9 L694.3 737.1 L689.0 737.3 L684.1 737.4 L679.7 737.4 L675.5 737.2 L671.3 737.0 L667.0 736.7 L662.3 736.3 L657.2 735.8 L651.8 735.2 L646.3 734.5 L640.7 733.7 L635.1 732.7 L629.6 731.6 L624.1 730.3 L618.6 728.8 L613.1 727.2 L607.6 725.5 L602.2 723.7 L596.9 721.9 L592.0 720.3 L587.6 718.7 L583.3 717.2 L578.6 715.3 L573.1 713.0 L566.5 710.2 L560.0 707.3 L554.5 704.8 L548.2 701.8 L539.4 697.7 L526.5 691.6 L507.8 682.8 L480.0 669.8 L444.0 652.9 L403.9 634.0 L363.8 615.2 L327.7 598.2 L299.9 585.2 L281.4 576.5 L269.0 570.7 L260.7 566.9 L254.5 564.0 L248.3 561.1 L240.0 557.2Z" fill="#a8aaaa"/>
<path d="M240.0 556.0 L248.3 559.8 L254.5 562.7 L260.7 565.6 L269.0 569.4 L281.3 575.2 L299.9 583.9 L327.7 596.9 L363.8 613.8 L404.0 632.6 L444.2 651.4 L480.2 668.2 L508.0 681.2 L526.7 690.0 L539.7 696.1 L548.5 700.3 L554.9 703.3 L560.5 705.8 L566.9 708.6 L573.6 711.5 L579.1 713.8 L583.8 715.6 L588.1 717.2 L592.5 718.7 L597.4 720.3 L602.7 722.1 L608.1 723.9 L613.5 725.6 L619.0 727.1 L624.5 728.6 L629.9 729.9 L635.4 731.0 L641.0 731.9 L646.5 732.7 L652.0 733.4 L657.4 734.0 L662.4 734.5 L667.1 734.9 L671.4 735.2 L675.5 735.4 L679.6 735.5 L684.0 735.5 L688.8 735.5 L694.1 735.3 L699.8 735.1 L705.7 734.7 L711.6 734.3 L717.5 733.8 L723.3 733.2 L728.8 732.6 L734.3 731.8 L739.7 731.0 L745.1 730.1 L750.4 729.1 L755.7 728.0 L761.1 726.7 L766.5 725.3 L771.9 723.7 L777.1 722.1 L782.1 720.5 L786.6 718.9 L790.9 717.3 L794.7 715.7 L798.4 714.1 L801.8 712.4 L805.0 710.6 L808.2 708.7 L811.2 706.8 L814.0 704.8 L816.6 702.7 L819.1 700.5 L821.4 698.2 L823.6 695.8 L825.6 693.2 L827.5 690.4 L829.3 687.5 L830.8 684.6 L832.1 681.9 L833.2 679.3 L833.9 676.9 L834.2 674.5 L834.4 672.3 L834.4 670.2 L834.3 668.2 L834.1 666.3 L834.0 664.4 L833.7 662.7 L833.3 661.1 L832.9 659.6 L832.4 658.1 L831.9 656.6 L831.4 655.2 L830.9 653.8 L830.3 652.5 L829.7 651.2 L829.2 649.9 L828.6 648.6 L828.6 648.6 L829.3 649.9 L830.1 651.3 L830.8 652.6 L831.5 653.9 L832.2 655.3 L832.9 656.8 L833.5 658.3 L834.1 659.8 L834.6 661.3 L835.1 662.9 L835.5 664.6 L835.8 666.5 L836.0 668.5 L836.2 670.7 L836.4 672.9 L836.3 675.3 L836.0 677.8 L835.4 680.3 L834.4 683.1 L833.1 686.2 L831.6 689.3 L829.9 692.4 L828.0 695.4 L825.9 698.2 L823.8 700.7 L821.4 703.1 L818.9 705.4 L816.3 707.6 L813.4 709.7 L810.4 711.8 L807.2 713.8 L804.0 715.7 L800.5 717.5 L796.8 719.2 L792.9 721.0 L788.6 722.7 L784.0 724.4 L778.9 726.2 L773.6 727.9 L768.2 729.5 L762.7 731.0 L757.3 732.4 L751.9 733.6 L746.4 734.7 L740.9 735.8 L735.4 736.7 L729.8 737.5 L724.2 738.2 L718.4 738.8 L712.4 739.4 L706.3 739.8 L700.4 740.2 L694.6 740.4 L689.2 740.6 L684.3 740.6 L679.8 740.6 L675.5 740.5 L671.2 740.3 L666.8 740.0 L662.0 739.6 L656.8 739.0 L651.4 738.4 L645.8 737.7 L640.2 736.8 L634.5 735.8 L629.0 734.7 L623.5 733.3 L617.9 731.8 L612.3 730.2 L606.8 728.4 L601.3 726.6 L596.0 724.8 L591.1 723.1 L586.7 721.5 L582.4 719.9 L577.7 718.1 L572.3 715.8 L565.6 712.9 L559.3 710.0 L553.8 707.5 L547.6 704.6 L538.9 700.4 L526.1 694.3 L507.4 685.5 L479.7 672.5 L443.8 655.5 L403.8 636.6 L363.7 617.7 L327.7 600.7 L299.9 587.6 L281.4 578.8 L269.0 573.0 L260.7 569.1 L254.5 566.2 L248.3 563.2 L240.0 559.4Z" fill="#a8aaaa"/>
<path d="M240.0 558.1 L248.3 562.0 L254.5 564.9 L260.7 567.8 L269.0 571.7 L281.4 577.5 L299.9 586.2 L327.7 599.3 L363.7 616.3 L403.8 635.2 L443.9 654.0 L479.9 671.0 L507.6 684.0 L526.3 692.8 L539.2 698.9 L547.9 703.0 L554.2 706.0 L559.7 708.5 L566.1 711.3 L572.7 714.2 L578.2 716.5 L582.9 718.4 L587.2 720.0 L591.6 721.5 L596.5 723.2 L601.8 725.0 L607.3 726.8 L612.8 728.5 L618.3 730.1 L623.8 731.6 L629.3 732.9 L634.9 734.1 L640.5 735.1 L646.1 735.9 L651.6 736.6 L657.0 737.2 L662.1 737.7 L666.9 738.2 L671.3 738.5 L675.5 738.7 L679.7 738.8 L684.2 738.8 L689.1 738.7 L694.4 738.6 L700.2 738.3 L706.1 738.0 L712.1 737.5 L718.1 737.0 L723.8 736.4 L729.4 735.7 L735.0 734.9 L740.5 734.1 L746.0 733.1 L751.4 732.0 L756.7 730.8 L762.1 729.5 L767.6 728.0 L773.0 726.4 L778.3 724.7 L783.3 723.0 L787.9 721.3 L792.1 719.6 L796.1 718.0 L799.7 716.3 L803.2 714.5 L806.5 712.6 L809.6 710.7 L812.6 708.7 L815.4 706.6 L818.1 704.4 L820.6 702.2 L822.9 699.8 L825.1 697.3 L827.1 694.6 L829.0 691.7 L830.8 688.6 L832.3 685.6 L833.6 682.7 L834.6 680.0 L835.3 677.4 L835.6 675.0 L835.7 672.7 L835.6 670.5 L835.4 668.4 L835.2 666.4 L835.0 664.6 L834.6 662.8 L834.1 661.2 L833.6 659.7 L833.1 658.2 L832.5 656.7 L831.9 655.3 L831.3 653.9 L830.6 652.6 L830.0 651.2 L829.3 649.9 L828.6 648.6 L828.6 648.6 L829.4 650.0 L830.3 651.3 L831.1 652.7 L832.0 654.0 L832.8 655.4 L833.5 656.9 L834.2 658.4 L834.9 659.9 L835.5 661.4 L836.1 663.0 L836.5 664.7 L836.9 666.6 L837.2 668.7 L837.5 670.9 L837.6 673.3 L837.7 675.7 L837.4 678.3 L836.8 681.0 L835.9 684.0 L834.6 687.1 L833.1 690.4 L831.4 693.7 L829.5 696.8 L827.4 699.7 L825.3 702.4 L822.9 704.8 L820.4 707.2 L817.7 709.5 L814.9 711.6 L811.8 713.8 L808.6 715.8 L805.3 717.8 L801.8 719.7 L798.1 721.5 L794.1 723.3 L789.9 725.1 L785.2 726.9 L780.1 728.7 L774.8 730.5 L769.3 732.2 L763.8 733.8 L758.3 735.2 L752.8 736.5 L747.3 737.7 L741.7 738.8 L736.1 739.8 L730.4 740.6 L724.7 741.4 L718.9 742.0 L712.8 742.6 L706.8 743.1 L700.7 743.4 L695.0 743.7 L689.5 743.8 L684.5 743.9 L679.9 743.9 L675.5 743.8 L671.1 743.6 L666.5 743.2 L661.7 742.8 L656.4 742.2 L651.0 741.6 L645.4 740.8 L639.7 739.9 L634.0 738.9 L628.4 737.7 L622.8 736.3 L617.2 734.8 L611.6 733.1 L606.0 731.3 L600.5 729.5 L595.1 727.7 L590.2 725.9 L585.8 724.3 L581.5 722.7 L576.8 720.8 L571.4 718.5 L564.8 715.6 L558.5 712.7 L553.1 710.2 L547.0 707.3 L538.4 703.2 L525.6 697.1 L507.0 688.3 L479.5 675.2 L443.6 658.2 L403.6 639.2 L363.6 620.2 L327.6 603.1 L299.9 589.9 L281.4 581.1 L269.0 575.3 L260.7 571.3 L254.5 568.4 L248.3 565.4 L240.0 561.5Z" fill="#a3a5a5"/>
<path d="M240.0 560.3 L248.3 564.2 L254.5 567.1 L260.7 570.1 L269.0 574.0 L281.4 579.8 L299.9 588.6 L327.7 601.7 L363.6 618.8 L403.7 637.7 L443.7 656.7 L479.6 673.7 L507.2 686.7 L525.9 695.6 L538.7 701.7 L547.3 705.8 L553.5 708.7 L558.9 711.2 L565.2 714.0 L571.9 717.0 L577.3 719.3 L582.0 721.1 L586.3 722.8 L590.7 724.4 L595.6 726.1 L601.0 727.9 L606.4 729.7 L612.0 731.5 L617.6 733.1 L623.2 734.7 L628.7 736.0 L634.3 737.2 L640.0 738.2 L645.6 739.0 L651.2 739.8 L656.6 740.4 L661.8 741.0 L666.7 741.4 L671.1 741.7 L675.5 742.0 L679.8 742.1 L684.4 742.1 L689.3 742.0 L694.8 741.8 L700.5 741.6 L706.5 741.2 L712.6 740.8 L718.6 740.2 L724.4 739.6 L730.1 738.9 L735.7 738.0 L741.3 737.1 L746.8 736.1 L752.3 734.9 L757.7 733.6 L763.2 732.2 L768.7 730.7 L774.1 729.0 L779.5 727.3 L784.5 725.5 L789.1 723.7 L793.4 722.0 L797.4 720.2 L801.1 718.5 L804.6 716.6 L807.9 714.7 L811.0 712.7 L814.1 710.6 L816.9 708.4 L819.6 706.2 L822.1 703.9 L824.4 701.4 L826.6 698.9 L828.6 696.0 L830.5 693.0 L832.3 689.8 L833.8 686.6 L835.1 683.5 L836.0 680.6 L836.6 678.0 L836.9 675.5 L836.9 673.1 L836.8 670.8 L836.5 668.6 L836.3 666.6 L836.0 664.7 L835.5 662.9 L835.0 661.3 L834.4 659.8 L833.8 658.3 L833.1 656.8 L832.5 655.4 L831.7 654.0 L831.0 652.6 L830.2 651.3 L829.4 650.0 L828.6 648.6 L828.6 648.6 L829.5 650.0 L830.5 651.3 L831.5 652.7 L832.4 654.1 L833.3 655.5 L834.1 657.0 L834.9 658.5 L835.6 660.0 L836.3 661.5 L837.0 663.1 L837.5 664.8 L837.9 666.8 L838.3 668.9 L838.7 671.2 L838.9 673.7 L839.0 676.2 L838.8 678.9 L838.3 681.7 L837.3 684.8 L836.1 688.1 L834.6 691.5 L832.9 694.9 L831.0 698.2 L828.9 701.3 L826.8 704.0 L824.4 706.5 L821.9 709.0 L819.2 711.3 L816.3 713.5 L813.3 715.7 L810.1 717.9 L806.7 719.9 L803.2 721.9 L799.4 723.8 L795.4 725.7 L791.1 727.5 L786.4 729.4 L781.3 731.3 L775.9 733.1 L770.4 734.9 L764.8 736.6 L759.3 738.1 L753.8 739.4 L748.2 740.7 L742.5 741.8 L736.8 742.8 L731.1 743.8 L725.3 744.6 L719.4 745.3 L713.3 745.8 L707.2 746.3 L701.1 746.7 L695.3 746.9 L689.8 747.1 L684.7 747.2 L680.0 747.2 L675.4 747.0 L671.0 746.8 L666.3 746.5 L661.4 746.0 L656.1 745.5 L650.6 744.8 L644.9 744.0 L639.2 743.0 L633.5 742.0 L627.8 740.8 L622.2 739.4 L616.5 737.8 L610.8 736.1 L605.2 734.3 L599.6 732.4 L594.2 730.5 L589.3 728.8 L584.9 727.1 L580.6 725.4 L575.9 723.5 L570.5 721.2 L563.9 718.3 L557.7 715.4 L552.4 712.9 L546.3 710.1 L537.8 706.0 L525.2 699.9 L506.7 691.1 L479.2 677.9 L443.4 660.8 L403.5 641.8 L363.5 622.7 L327.6 605.5 L299.9 592.3 L281.4 583.4 L269.1 577.5 L260.8 573.6 L254.5 570.6 L248.3 567.6 L240.0 563.7Z" fill="#9ea0a0"/>
<path d="M240.0 562.4 L248.3 566.4 L254.5 569.4 L260.8 572.3 L269.0 576.3 L281.4 582.1 L299.9 591.0 L327.6 604.2 L363.5 621.3 L403.5 640.3 L443.5 659.3 L479.3 676.4 L506.9 689.5 L525.4 698.3 L538.1 704.4 L546.7 708.5 L552.8 711.4 L558.1 713.9 L564.4 716.7 L571.0 719.7 L576.4 722.0 L581.1 723.9 L585.4 725.6 L589.8 727.2 L594.7 728.9 L600.1 730.8 L605.6 732.6 L611.2 734.4 L616.9 736.1 L622.5 737.7 L628.1 739.1 L633.8 740.3 L639.5 741.3 L645.2 742.2 L650.8 743.0 L656.3 743.7 L661.5 744.2 L666.4 744.7 L671.0 745.0 L675.5 745.2 L679.9 745.3 L684.6 745.3 L689.6 745.3 L695.1 745.1 L700.9 744.8 L706.9 744.5 L713.0 744.0 L719.1 743.5 L725.0 742.8 L730.7 742.0 L736.4 741.1 L742.1 740.1 L747.7 739.0 L753.2 737.8 L758.7 736.5 L764.2 735.0 L769.8 733.4 L775.3 731.7 L780.6 729.9 L785.7 728.0 L790.4 726.2 L794.7 724.4 L798.7 722.5 L802.4 720.6 L805.9 718.7 L809.3 716.7 L812.5 714.6 L815.5 712.5 L818.4 710.3 L821.1 708.0 L823.6 705.6 L825.9 703.1 L828.1 700.4 L830.1 697.4 L832.0 694.2 L833.8 690.9 L835.3 687.5 L836.5 684.3 L837.5 681.3 L838.0 678.6 L838.3 676.0 L838.2 673.4 L838.0 671.1 L837.7 668.8 L837.3 666.7 L837.0 664.8 L836.5 663.0 L835.9 661.4 L835.2 659.9 L834.5 658.4 L833.8 656.9 L833.0 655.5 L832.2 654.0 L831.3 652.7 L830.4 651.3 L829.5 650.0 L828.6 648.6 L828.6 648.6 L829.6 650.0 L830.7 651.4 L831.8 652.8 L832.8 654.2 L833.8 655.6 L834.7 657.1 L835.6 658.6 L836.4 660.1 L837.2 661.6 L837.9 663.2 L838.5 665.0 L839.0 666.9 L839.5 669.1 L839.9 671.5 L840.2 674.0 L840.3 676.7 L840.2 679.5 L839.7 682.4 L838.8 685.6 L837.6 689.1 L836.1 692.6 L834.4 696.2 L832.5 699.7 L830.4 702.8 L828.2 705.6 L825.9 708.3 L823.4 710.7 L820.7 713.1 L817.8 715.4 L814.7 717.7 L811.5 719.9 L808.1 722.0 L804.5 724.1 L800.8 726.1 L796.7 728.0 L792.4 730.0 L787.6 731.9 L782.5 733.9 L777.1 735.8 L771.5 737.6 L765.9 739.4 L760.3 740.9 L754.7 742.4 L749.0 743.7 L743.3 744.9 L737.5 745.9 L731.7 746.9 L725.9 747.7 L719.9 748.5 L713.8 749.1 L707.6 749.5 L701.5 749.9 L695.6 750.2 L690.0 750.4 L684.9 750.4 L680.0 750.4 L675.4 750.3 L670.8 750.1 L666.1 749.7 L661.1 749.3 L655.7 748.7 L650.2 748.0 L644.5 747.1 L638.7 746.2 L632.9 745.1 L627.2 743.8 L621.5 742.4 L615.8 740.8 L610.0 739.0 L604.3 737.2 L598.8 735.3 L593.3 733.4 L588.4 731.6 L584.0 729.9 L579.6 728.2 L575.0 726.3 L569.6 723.9 L563.1 721.0 L556.9 718.1 L551.7 715.7 L545.7 712.8 L537.3 708.7 L524.8 702.7 L506.3 693.8 L478.9 680.6 L443.2 663.5 L403.3 644.3 L363.4 625.2 L327.6 607.9 L299.9 594.6 L281.4 585.8 L269.1 579.8 L260.8 575.8 L254.5 572.8 L248.3 569.8 L240.0 565.8Z" fill="#989a9a"/>
<path d="M240.0 564.6 L248.3 568.6 L254.5 571.6 L260.8 574.6 L269.1 578.5 L281.4 584.5 L299.9 593.3 L327.6 606.6 L363.4 623.8 L403.4 642.9 L443.3 662.0 L479.0 679.1 L506.5 692.3 L525.0 701.1 L537.6 707.2 L546.1 711.3 L552.1 714.1 L557.4 716.6 L563.6 719.4 L570.1 722.4 L575.5 724.7 L580.2 726.7 L584.5 728.4 L588.9 730.0 L593.8 731.8 L599.2 733.7 L604.8 735.6 L610.5 737.4 L616.2 739.1 L621.9 740.7 L627.5 742.1 L633.2 743.3 L639.0 744.4 L644.7 745.4 L650.4 746.2 L655.9 746.9 L661.3 747.5 L666.2 747.9 L670.9 748.3 L675.4 748.5 L680.0 748.6 L684.7 748.6 L689.9 748.5 L695.4 748.4 L701.3 748.1 L707.4 747.7 L713.5 747.3 L719.6 746.7 L725.6 746.0 L731.4 745.1 L737.1 744.2 L742.9 743.2 L748.6 742.0 L754.2 740.7 L759.7 739.3 L765.3 737.8 L770.9 736.1 L776.4 734.3 L781.8 732.4 L786.9 730.5 L791.6 728.6 L796.0 726.7 L800.0 724.8 L803.8 722.8 L807.3 720.8 L810.7 718.8 L813.9 716.6 L817.0 714.4 L819.8 712.1 L822.5 709.8 L825.1 707.3 L827.4 704.7 L829.6 701.9 L831.6 698.9 L833.5 695.5 L835.2 692.0 L836.7 688.5 L838.0 685.1 L838.9 682.0 L839.4 679.2 L839.6 676.4 L839.5 673.8 L839.2 671.3 L838.8 669.0 L838.4 666.9 L838.0 664.9 L837.4 663.1 L836.7 661.5 L836.0 660.0 L835.2 658.5 L834.4 657.0 L833.5 655.6 L832.6 654.1 L831.6 652.7 L830.6 651.4 L829.6 650.0 L828.6 648.6 L828.6 648.6 L829.7 650.0 L830.9 651.4 L832.1 652.8 L833.2 654.2 L834.3 655.7 L835.3 657.2 L836.3 658.7 L837.2 660.2 L838.1 661.7 L838.8 663.3 L839.5 665.1 L840.1 667.1 L840.6 669.3 L841.1 671.8 L841.5 674.4 L841.7 677.2 L841.6 680.1 L841.1 683.1 L840.3 686.4 L839.1 690.0 L837.6 693.8 L835.9 697.5 L834.0 701.1 L831.9 704.3 L829.7 707.2 L827.4 710.0 L824.8 712.5 L822.1 715.0 L819.2 717.3 L816.1 719.7 L812.9 721.9 L809.5 724.1 L805.9 726.3 L802.1 728.3 L798.0 730.4 L793.6 732.4 L788.8 734.4 L783.6 736.4 L778.2 738.4 L772.6 740.3 L766.9 742.1 L761.3 743.8 L755.6 745.3 L749.9 746.6 L744.1 747.9 L738.2 749.0 L732.4 750.0 L726.4 750.9 L720.4 751.7 L714.2 752.3 L708.0 752.8 L701.9 753.2 L695.9 753.4 L690.3 753.6 L685.0 753.7 L680.1 753.7 L675.4 753.6 L670.7 753.3 L665.9 753.0 L660.8 752.5 L655.4 751.9 L649.8 751.1 L644.0 750.3 L638.2 749.3 L632.4 748.2 L626.6 746.9 L620.9 745.4 L615.1 743.8 L609.3 742.0 L603.5 740.1 L597.9 738.2 L592.4 736.2 L587.5 734.4 L583.0 732.7 L578.7 731.0 L574.1 729.0 L568.8 726.6 L562.3 723.7 L556.1 720.8 L551.0 718.4 L545.1 715.6 L536.8 711.5 L524.3 705.5 L506.0 696.6 L478.6 683.4 L443.0 666.1 L403.2 646.9 L363.3 627.6 L327.5 610.3 L299.9 597.0 L281.5 588.1 L269.1 582.1 L260.8 578.1 L254.6 575.0 L248.3 572.0 L240.0 568.0Z" fill="#909292"/>
<path d="M240.0 566.7 L248.3 570.8 L254.5 573.8 L260.8 576.8 L269.1 580.8 L281.4 586.8 L299.9 595.7 L327.5 609.0 L363.4 626.2 L403.2 645.5 L443.1 664.7 L478.8 681.8 L506.2 695.0 L524.6 703.9 L537.1 710.0 L545.5 714.0 L551.4 716.9 L556.6 719.3 L562.7 722.1 L569.3 725.1 L574.6 727.5 L579.2 729.4 L583.6 731.2 L588.0 732.8 L592.9 734.6 L598.4 736.6 L604.0 738.5 L609.7 740.3 L615.5 742.1 L621.2 743.7 L626.9 745.2 L632.7 746.4 L638.5 747.5 L644.3 748.5 L650.0 749.4 L655.6 750.1 L661.0 750.7 L666.0 751.2 L670.8 751.5 L675.4 751.7 L680.1 751.9 L684.9 751.9 L690.1 751.8 L695.8 751.6 L701.7 751.4 L707.8 751.0 L714.0 750.5 L720.1 749.9 L726.1 749.2 L732.0 748.3 L737.9 747.3 L743.7 746.2 L749.4 745.0 L755.1 743.6 L760.7 742.2 L766.3 740.6 L772.0 738.8 L777.6 736.9 L783.0 735.0 L788.1 733.0 L792.9 731.0 L797.3 729.1 L801.3 727.1 L805.1 725.0 L808.7 723.0 L812.1 720.8 L815.3 718.6 L818.4 716.3 L821.3 713.9 L824.0 711.5 L826.6 709.0 L828.9 706.3 L831.1 703.5 L833.1 700.3 L835.0 696.8 L836.7 693.1 L838.2 689.5 L839.4 686.0 L840.3 682.7 L840.8 679.7 L840.9 676.9 L840.8 674.2 L840.4 671.6 L840.0 669.2 L839.5 667.0 L839.0 665.0 L838.3 663.2 L837.6 661.6 L836.8 660.1 L835.9 658.6 L835.0 657.1 L834.0 655.6 L833.0 654.2 L831.9 652.8 L830.8 651.4 L829.7 650.0 L828.6 648.6 L828.6 648.6 L829.8 650.0 L831.1 651.5 L832.4 652.9 L833.7 654.3 L834.8 655.8 L835.9 657.3 L837.0 658.8 L838.0 660.3 L838.9 661.8 L839.8 663.4 L840.5 665.2 L841.2 667.2 L841.7 669.6 L842.3 672.1 L842.7 674.8 L843.0 677.6 L843.0 680.7 L842.5 683.8 L841.7 687.2 L840.5 691.0 L839.1 694.9 L837.4 698.8 L835.5 702.5 L833.4 705.9 L831.2 708.9 L828.9 711.7 L826.3 714.3 L823.6 716.8 L820.7 719.2 L817.5 721.6 L814.3 724.0 L810.8 726.3 L807.2 728.5 L803.4 730.6 L799.3 732.7 L794.9 734.8 L790.0 736.9 L784.8 739.0 L779.4 741.1 L773.7 743.1 L768.0 744.9 L762.3 746.6 L756.6 748.2 L750.8 749.6 L744.9 750.9 L739.0 752.1 L733.0 753.2 L727.0 754.1 L720.9 754.9 L714.7 755.5 L708.5 756.0 L702.3 756.4 L696.3 756.7 L690.5 756.9 L685.2 757.0 L680.2 757.0 L675.4 756.8 L670.6 756.6 L665.7 756.2 L660.5 755.7 L655.0 755.1 L649.3 754.3 L643.5 753.4 L637.7 752.4 L631.8 751.3 L626.0 749.9 L620.2 748.4 L614.4 746.8 L608.5 744.9 L602.7 743.0 L597.0 741.1 L591.5 739.1 L586.6 737.2 L582.1 735.5 L577.8 733.7 L573.2 731.7 L567.9 729.3 L561.4 726.4 L555.4 723.5 L550.3 721.1 L544.5 718.3 L536.3 714.3 L523.9 708.2 L505.6 699.3 L478.3 686.1 L442.7 668.8 L403.0 649.5 L363.2 630.1 L327.5 612.8 L299.9 599.3 L281.5 590.4 L269.1 584.4 L260.8 580.3 L254.6 577.2 L248.3 574.2 L240.0 570.1Z" fill="#898b8b"/>
<path d="M240.0 568.9 L248.3 572.9 L254.6 576.0 L260.8 579.0 L269.1 583.1 L281.5 589.1 L299.9 598.0 L327.5 611.4 L363.3 628.7 L403.1 648.0 L442.9 667.3 L478.5 684.6 L505.8 697.8 L524.1 706.7 L536.6 712.7 L544.8 716.8 L550.7 719.6 L555.8 722.0 L561.9 724.8 L568.4 727.8 L573.7 730.2 L578.3 732.2 L582.6 733.9 L587.1 735.7 L592.0 737.5 L597.5 739.4 L603.2 741.4 L608.9 743.3 L614.8 745.1 L620.6 746.8 L626.4 748.2 L632.1 749.5 L638.0 750.7 L643.8 751.7 L649.6 752.5 L655.2 753.3 L660.7 753.9 L665.8 754.4 L670.7 754.8 L675.4 755.0 L680.2 755.1 L685.1 755.1 L690.4 755.1 L696.1 754.9 L702.1 754.6 L708.2 754.2 L714.4 753.7 L720.6 753.1 L726.7 752.3 L732.6 751.4 L738.6 750.4 L744.5 749.2 L750.3 747.9 L756.0 746.5 L761.7 745.0 L767.4 743.4 L773.1 741.5 L778.7 739.6 L784.2 737.6 L789.3 735.5 L794.1 733.5 L798.6 731.4 L802.7 729.3 L806.5 727.2 L810.1 725.1 L813.5 722.8 L816.7 720.5 L819.9 718.2 L822.8 715.8 L825.5 713.3 L828.0 710.7 L830.4 708.0 L832.6 705.0 L834.6 701.7 L836.5 698.1 L838.2 694.3 L839.7 690.4 L840.9 686.8 L841.7 683.4 L842.2 680.3 L842.3 677.4 L842.0 674.6 L841.6 671.9 L841.1 669.4 L840.6 667.2 L840.0 665.1 L839.3 663.3 L838.4 661.7 L837.5 660.2 L836.6 658.8 L835.6 657.3 L834.6 655.7 L833.4 654.3 L832.2 652.8 L831.0 651.4 L829.8 650.0 L828.6 648.6 L828.6 648.6 L830.0 650.1 L831.3 651.5 L832.7 652.9 L834.1 654.4 L835.4 655.9 L836.6 657.4 L837.7 658.9 L838.8 660.4 L839.8 661.9 L840.7 663.5 L841.5 665.3 L842.2 667.4 L842.9 669.8 L843.5 672.4 L844.0 675.1 L844.3 678.1 L844.4 681.2 L844.0 684.5 L843.2 688.1 L842.0 692.0 L840.6 696.0 L838.8 700.0 L837.0 703.9 L834.9 707.4 L832.7 710.5 L830.4 713.4 L827.8 716.1 L825.1 718.6 L822.1 721.1 L819.0 723.6 L815.7 726.0 L812.2 728.4 L808.6 730.7 L804.7 732.9 L800.6 735.1 L796.1 737.3 L791.2 739.4 L786.0 741.6 L780.5 743.7 L774.8 745.8 L769.0 747.7 L763.3 749.5 L757.5 751.1 L751.6 752.6 L745.7 754.0 L739.7 755.2 L733.6 756.3 L727.6 757.3 L721.5 758.1 L715.2 758.8 L708.9 759.3 L702.7 759.7 L696.6 760.0 L690.8 760.1 L685.4 760.2 L680.3 760.2 L675.4 760.1 L670.5 759.9 L665.5 759.5 L660.2 759.0 L654.7 758.3 L648.9 757.5 L643.1 756.6 L637.2 755.5 L631.3 754.3 L625.4 753.0 L619.6 751.5 L613.7 749.8 L607.7 747.9 L601.9 746.0 L596.2 744.0 L590.6 741.9 L585.7 740.1 L581.2 738.3 L576.9 736.5 L572.3 734.5 L567.0 732.0 L560.6 729.1 L554.6 726.2 L549.6 723.8 L543.9 721.1 L535.8 717.1 L523.5 711.0 L505.3 702.1 L478.0 688.8 L442.5 671.5 L402.9 652.1 L363.1 632.6 L327.4 615.2 L299.9 601.7 L281.5 592.7 L269.2 586.6 L260.9 582.5 L254.6 579.4 L248.3 576.3 L240.0 572.3Z" fill="#808282"/>
<path d="M240.0 571.0 L248.3 575.1 L254.6 578.2 L260.8 581.3 L269.1 585.4 L281.5 591.4 L299.9 600.4 L327.5 613.8 L363.2 631.2 L402.9 650.6 L442.7 670.0 L478.2 687.3 L505.5 700.6 L523.7 709.5 L536.0 715.5 L544.2 719.5 L550.0 722.3 L555.0 724.7 L561.1 727.5 L567.5 730.5 L572.8 732.9 L577.4 734.9 L581.7 736.7 L586.2 738.5 L591.1 740.3 L596.6 742.3 L602.3 744.3 L608.2 746.2 L614.1 748.1 L619.9 749.8 L625.8 751.3 L631.6 752.6 L637.5 753.8 L643.3 754.8 L649.2 755.7 L654.9 756.5 L660.4 757.2 L665.6 757.7 L670.6 758.0 L675.4 758.3 L680.3 758.4 L685.3 758.4 L690.7 758.3 L696.4 758.1 L702.4 757.9 L708.6 757.5 L714.9 757.0 L721.2 756.3 L727.3 755.5 L733.3 754.6 L739.3 753.5 L745.2 752.3 L751.2 750.9 L757.0 749.4 L762.7 747.9 L768.4 746.1 L774.2 744.2 L779.9 742.2 L785.3 740.1 L790.6 738.0 L795.4 735.9 L799.8 733.8 L804.0 731.6 L807.8 729.4 L811.5 727.2 L814.9 724.9 L818.2 722.5 L821.3 720.0 L824.2 717.6 L827.0 715.1 L829.5 712.4 L831.9 709.6 L834.1 706.5 L836.1 703.1 L838.0 699.3 L839.7 695.4 L841.2 691.4 L842.4 687.6 L843.2 684.1 L843.6 680.9 L843.6 677.8 L843.3 674.9 L842.8 672.2 L842.2 669.6 L841.6 667.3 L841.0 665.2 L840.2 663.4 L839.3 661.8 L838.3 660.3 L837.3 658.9 L836.2 657.4 L835.1 655.8 L833.8 654.4 L832.5 652.9 L831.2 651.5 L829.9 650.0 L828.6 648.6 L828.6 648.6 L830.0 650.1 L831.5 651.5 L832.9 653.0 L834.4 654.5 L835.7 656.0 L837.0 657.5 L838.2 659.0 L839.3 660.5 L840.4 662.0 L841.4 663.6 L842.3 665.4 L843.0 667.5 L843.7 669.9 L844.4 672.6 L844.9 675.4 L845.3 678.4 L845.3 681.6 L845.0 685.0 L844.2 688.7 L843.1 692.6 L841.6 696.8 L839.9 701.0 L838.0 704.9 L836.0 708.5 L833.8 711.7 L831.4 714.6 L828.9 717.3 L826.1 719.9 L823.2 722.5 L820.0 725.0 L816.7 727.5 L813.2 729.9 L809.6 732.2 L805.7 734.5 L801.5 736.8 L797.0 739.0 L792.1 741.2 L786.9 743.4 L781.3 745.6 L775.6 747.7 L769.8 749.7 L764.0 751.5 L758.2 753.2 L752.3 754.7 L746.2 756.2 L740.2 757.4 L734.1 758.6 L728.0 759.6 L721.8 760.4 L715.5 761.1 L709.2 761.6 L702.9 762.0 L696.8 762.3 L691.0 762.5 L685.5 762.6 L680.4 762.6 L675.4 762.5 L670.4 762.2 L665.3 761.8 L660.0 761.3 L654.4 760.6 L648.6 759.8 L642.8 758.9 L636.8 757.8 L630.9 756.6 L625.0 755.2 L619.1 753.6 L613.1 751.9 L607.2 750.0 L601.3 748.1 L595.5 746.0 L590.0 744.0 L585.0 742.1 L580.6 740.3 L576.2 738.5 L571.7 736.4 L566.4 734.0 L560.0 731.0 L554.0 728.2 L549.1 725.8 L543.4 723.0 L535.4 719.0 L523.1 713.0 L505.0 704.1 L477.8 690.8 L442.4 673.4 L402.8 653.9 L363.1 634.4 L327.4 616.9 L299.9 603.4 L281.5 594.4 L269.2 588.3 L260.9 584.2 L254.6 581.0 L248.3 577.9 L240.0 573.8Z" fill="#757777"/>
</g>
<path d="M240.0 543.7 L248.2 547.4 L254.4 550.1 L260.6 552.8 L268.8 556.4 L281.2 562.0 L299.9 570.4 L327.9 583.1 L364.3 599.5 L404.8 617.8 L445.4 636.2 L481.8 652.7 L510.0 665.4 L529.2 674.1 L542.7 680.3 L552.1 684.6 L558.9 687.7 L564.9 690.3 L571.7 693.2 L578.6 696.0 L584.3 698.1 L589.0 699.8 L593.4 701.2 L597.7 702.5 L602.5 704.0 L607.6 705.6 L612.8 707.2 L617.9 708.6 L623.0 710.0 L628.2 711.3 L633.3 712.4 L638.5 713.3 L643.8 714.1 L649.2 714.7 L654.4 715.2 L659.4 715.6 L664.1 716.0 L668.3 716.3 L672.0 716.6 L675.6 716.7 L679.1 716.8 L683.0 716.8 L687.3 716.8 L692.2 716.7 L697.6 716.4 L703.2 716.2 L708.9 715.8 L714.6 715.4 L720.0 715.0 L725.2 714.6 L730.2 714.1 L735.2 713.7 L740.1 713.1 L745.1 712.5 L750.0 711.7 L755.0 710.8 L760.2 709.7 L765.3 708.6 L770.4 707.4 L775.1 706.2 L779.5 705.0 L783.5 703.8 L787.2 702.7 L790.7 701.5 L793.9 700.3 L797.0 698.9 L800.0 697.5 L802.9 695.9 L805.6 694.3 L808.2 692.5 L810.6 690.7 L812.9 688.9 L815.0 687.0 L817.0 685.1 L819.0 683.1 L820.8 681.1 L822.4 679.1 L823.8 677.2 L825.0 675.3 L825.9 673.5 L826.6 671.8 L827.1 670.2 L827.5 668.6 L827.7 667.0 L828.0 665.4 L828.2 663.8 L828.3 662.2 L828.4 660.5 L828.4 659.0 L828.4 657.4 L828.4 656.0 L828.4 654.7 L828.5 653.4 L828.5 652.2 L828.5 651.0 L828.6 649.8 L828.6 648.6 L828.6 648.6 L830.0 650.1 L831.5 651.5 L832.9 653.0 L834.4 654.5 L835.7 656.0 L837.0 657.5 L838.2 659.0 L839.3 660.5 L840.4 662.0 L841.4 663.6 L842.3 665.4 L843.0 667.5 L843.7 669.9 L844.4 672.6 L844.9 675.4 L845.3 678.4 L845.3 681.6 L845.0 685.0 L844.2 688.7 L843.1 692.6 L841.6 696.8 L839.9 701.0 L838.0 704.9 L836.0 708.5 L833.8 711.7 L831.4 714.6 L828.9 717.3 L826.1 719.9 L823.2 722.5 L820.0 725.0 L816.7 727.5 L813.2 729.9 L809.6 732.2 L805.7 734.5 L801.5 736.8 L797.0 739.0 L792.1 741.2 L786.9 743.4 L781.3 745.6 L775.6 747.7 L769.8 749.7 L764.0 751.5 L758.2 753.2 L752.3 754.7 L746.2 756.2 L740.2 757.4 L734.1 758.6 L728.0 759.6 L721.8 760.4 L715.5 761.1 L709.2 761.6 L702.9 762.0 L696.8 762.3 L691.0 762.5 L685.5 762.6 L680.4 762.6 L675.4 762.5 L670.4 762.2 L665.3 761.8 L660.0 761.3 L654.4 760.6 L648.6 759.8 L642.8 758.9 L636.8 757.8 L630.9 756.6 L625.0 755.2 L619.1 753.6 L613.1 751.9 L607.2 750.0 L601.3 748.1 L595.5 746.0 L590.0 744.0 L585.0 742.1 L580.6 740.3 L576.2 738.5 L571.7 736.4 L566.4 734.0 L560.0 731.0 L554.0 728.2 L549.1 725.8 L543.4 723.0 L535.4 719.0 L523.1 713.0 L505.0 704.1 L477.8 690.8 L442.4 673.4 L402.8 653.9 L363.1 634.4 L327.4 616.9 L299.9 603.4 L281.5 594.4 L269.2 588.3 L260.9 584.2 L254.6 581.0 L248.3 577.9 L240.0 573.8Z" fill="url(#gfl)"/>
</g>
<path d="M240.0 543.7 L248.2 547.4 L254.4 550.1 L260.6 552.8 L268.8 556.4 L281.2 562.0 L299.9 570.4 L327.9 583.1 L364.3 599.5 L404.8 617.8 L445.4 636.2 L481.8 652.7 L510.0 665.4 L529.2 674.1 L542.7 680.3 L552.1 684.6 L558.9 687.7 L564.9 690.3 L571.7 693.2 L578.6 696.0 L584.3 698.1 L589.0 699.8 L593.4 701.2 L597.7 702.5 L602.5 704.0 L607.6 705.6 L612.8 707.2 L617.9 708.6 L623.0 710.0 L628.2 711.3 L633.3 712.4 L638.5 713.3 L643.8 714.1 L649.2 714.7 L654.4 715.2 L659.4 715.6 L664.1 716.0 L668.3 716.3 L672.0 716.6 L675.6 716.7 L679.1 716.8 L683.0 716.8 L687.3 716.8 L692.2 716.7 L697.6 716.4 L703.2 716.2 L708.9 715.8 L714.6 715.4 L720.0 715.0 L725.2 714.6 L730.2 714.1 L735.2 713.7 L740.1 713.1 L745.1 712.5 L750.0 711.7 L755.0 710.8 L760.2 709.7 L765.3 708.6 L770.4 707.4 L775.1 706.2 L779.5 705.0 L783.5 703.8 L787.2 702.7 L790.7 701.5 L793.9 700.3 L797.0 698.9 L800.0 697.5 L802.9 695.9 L805.6 694.3 L808.2 692.5 L810.6 690.7 L812.9 688.9 L815.0 687.0 L817.0 685.1 L819.0 683.1 L820.8 681.1 L822.4 679.1 L823.8 677.2 L825.0 675.3 L825.9 673.5 L826.6 671.8 L827.1 670.2 L827.5 668.6 L827.7 667.0 L828.0 665.4 L828.2 663.8 L828.3 662.2 L828.4 660.5 L828.4 659.0 L828.4 657.4 L828.4 656.0 L828.4 654.7 L828.5 653.4 L828.5 652.2 L828.5 651.0 L828.6 649.8 L828.6 648.6" fill="none" stroke="#636565" stroke-width="1.1" opacity="0.75"/>
<path d="M828.6 648.6 L826.0 646.2 L823.4 643.8 L820.7 641.5 L818.0 639.1 L815.2 636.7 L812.2 634.4 L809.2 632.0 L806.1 629.7 L802.8 627.3 L799.3 624.8 L795.6 622.1 L791.6 619.2 L787.5 616.3 L783.4 613.5 L779.5 610.9 L775.8 608.5 L772.1 606.2 L768.5 604.0 L765.0 602.0 L761.6 600.0 L759.2 598.5 L757.7 597.6 L755.9 596.5 L752.6 594.7 L746.7 591.5 L737.1 586.5 L724.6 580.0 L710.7 572.9 L697.0 565.8 L685.0 559.5 L674.5 553.9 L664.4 548.4 L655.2 543.3 L646.9 538.8 L640.0 535.0 L634.8 532.2 L631.1 530.2 L628.3 528.7 L625.9 527.5 L623.4 526.2 L620.7 524.8 L618.4 523.6 L616.1 522.5 L614.0 521.6 L612.0 521.0 L610.0 520.7 L608.1 520.5 L606.3 520.7 L604.6 521.0 L603.0 521.5 L601.4 522.2 L599.8 523.2 L598.3 524.4 L597.0 525.7 L596.0 527.0 L595.3 528.4 L594.8 530.0 L594.5 531.6 L594.4 533.3 L594.5 535.0 L594.8 536.7 L595.3 538.4 L596.0 540.1 L596.9 541.8 L598.0 543.5 L598.9 544.9 L599.6 546.1 L600.7 547.4 L602.7 549.1 L606.0 551.5 L611.0 554.8 L617.2 558.7 L624.4 563.1 L632.1 567.8 L640.0 572.5 L648.5 577.5 L657.7 582.9 L667.2 588.4 L676.5 593.8 L685.0 598.7 L692.9 603.2 L700.4 607.5 L707.6 611.5 L714.1 615.2 L720.0 618.5 L724.9 621.2 L729.0 623.5 L732.6 625.4 L736.1 627.4 L739.8 629.7 L743.8 632.3 L747.8 635.1 L751.7 637.9 L755.7 640.8 L759.7 643.6 L763.8 646.4 L768.0 649.3 L772.1 652.1 L776.0 654.9 L779.5 657.5 L782.6 660.0 L785.3 662.4 L787.8 664.8 L790.0 667.0 L792.0 669.0 L793.7 670.9 L795.1 672.5 L796.2 674.1 L797.2 675.6 L798.0 677.0 L798.6 678.4 L799.1 679.6 L799.3 680.9 L799.6 682.1 L799.9 683.3" fill="none" stroke="#f59a3c" stroke-width="1.5" opacity="0.45"/>
<path d="M250.0 476.5 L260.4 477.1 L271.1 477.6 L281.6 478.2 L291.6 478.8 L300.6 479.3 L308.5 479.8 L315.5 480.2 L321.9 480.6 L327.8 481.0 L333.4 481.5 L338.4 482.1 L342.7 482.7 L346.7 483.4 L350.6 484.1 L355.0 485.0 L359.2 485.9 L363.0 486.7 L367.2 487.7 L372.6 489.1 L380.0 491.0 L390.2 493.7 L402.9 497.0 L416.5 500.7 L429.6 504.3 L441.0 507.4 L450.4 510.1 L458.9 512.5 L466.5 514.8 L473.4 516.9 L480.0 519.0 L486.2 521.0 L491.8 523.0 L496.8 524.8 L501.2 526.5 L505.0 528.0 L507.9 529.3 L509.9 530.4 L511.5 531.3 L512.7 532.3 L514.0 533.5 L515.3 534.9 L516.6 536.3 L517.6 537.9 L518.4 539.4 L519.0 541.0 L519.3 542.6 L519.4 544.2 L519.3 545.9 L519.0 547.5 L518.5 549.0 L517.8 550.5 L516.8 551.9 L515.6 553.3 L514.4 554.5 L513.0 555.5 L511.6 556.2 L510.2 556.7 L508.6 557.0 L506.8 557.2 L504.7 557.2 L502.3 557.1 L499.7 556.8 L496.8 556.4 L493.6 555.8 L490.0 555.0 L486.3 554.0 L482.5 552.9 L478.3 551.6 L473.3 550.0 L467.0 548.0 L459.3 545.5 L450.6 542.6 L440.9 539.4 L430.6 536.1 L420.0 533.0 L408.8 529.9 L396.9 526.8 L384.6 523.7 L372.2 520.7 L360.0 518.0 L347.9 515.5 L335.8 513.3 L323.7 511.2 L311.9 509.2 L300.6 507.4 L289.9 505.7 L279.7 504.2 L269.8 502.8 L260.0 501.4 L250.0 500.0" fill="none" stroke="#f59a3c" stroke-width="1.5" opacity="0.45"/>
<path d="M240.0 538.2 L248.2 541.9 L254.4 544.6 L260.6 547.3 L268.8 551.0 L281.2 556.5 L299.9 564.8 L328.3 577.5 L365.4 594.0 L406.8 612.4 L447.7 630.7 L483.6 646.7 L510.0 658.5 L525.5 665.4 L533.5 669.0 L536.6 670.4 L537.2 670.7 L537.7 671.0 L540.8 672.4 L545.9 674.7 L551.1 677.0 L556.2 679.4 L561.4 681.7 L566.6 683.9 L571.7 686.2 L576.8 688.5 L582.0 690.8 L587.1 693.1 L592.2 695.3 L597.4 697.4 L602.5 699.3 L607.6 701.0 L612.8 702.6 L617.9 704.1 L623.0 705.5 L628.2 706.7 L633.3 707.8 L638.5 708.8 L643.8 709.6 L649.2 710.2 L654.4 710.8 L659.4 711.3 L664.1 711.7 L668.4 712.0 L672.4 712.2 L676.2 712.4 L679.9 712.4 L683.5 712.4 L687.3 712.4 L691.1 712.3 L695.0 712.2 L698.8 712.0 L702.6 711.8 L706.5 711.5 L710.4 711.2 L714.4 710.8 L718.5 710.3 L722.6 709.8 L726.7 709.3 L730.9 708.7 L735.0 708.0 L739.2 707.3 L743.4 706.6 L747.7 705.8 L751.8 705.0 L755.9 704.1 L759.7 703.1 L763.4 701.9 L766.9 700.7 L770.3 699.3 L773.5 697.9 L776.6 696.5 L779.5 695.2 L782.2 694.0 L784.8 692.7 L787.3 691.5 L789.5 690.3 L791.6 689.2 L793.4 688.2 L794.9 687.3 L796.1 686.4 L797.1 685.6 L798.0 684.9 L798.9 684.1 L799.9 683.3" fill="none" stroke="#f59a28" stroke-width="1.9" stroke-linecap="round"/>
<path d="M240.0 573.8 L248.3 577.9 L254.6 581.0 L260.9 584.2 L269.2 588.3 L281.5 594.4 L299.9 603.4 L327.4 616.9 L363.1 634.4 L402.8 653.9 L442.4 673.4 L477.8 690.8 L505.0 704.1 L523.1 713.0 L535.4 719.0 L543.4 723.0 L549.1 725.8 L554.0 728.2 L560.0 731.0 L566.4 734.0 L571.7 736.4 L576.2 738.5 L580.6 740.3 L585.0 742.1 L590.0 744.0 L595.5 746.0 L601.3 748.1 L607.2 750.0 L613.1 751.9 L619.1 753.6 L625.0 755.2 L630.9 756.6 L636.8 757.8 L642.8 758.9 L648.6 759.8 L654.4 760.6 L660.0 761.3 L665.3 761.8 L670.4 762.2 L675.4 762.5 L680.4 762.6 L685.5 762.6 L691.0 762.5 L696.8 762.3 L702.9 762.0 L709.2 761.6 L715.5 761.1 L721.8 760.4 L728.0 759.6 L734.1 758.6 L740.2 757.4 L746.2 756.2 L752.3 754.7 L758.2 753.2 L764.0 751.5 L769.8 749.7 L775.6 747.7 L781.3 745.6 L786.9 743.4 L792.1 741.2 L797.0 739.0 L801.5 736.8 L805.7 734.5 L809.6 732.2 L813.2 729.9 L816.7 727.5 L820.0 725.0 L823.2 722.5 L826.1 719.9 L828.9 717.3 L831.4 714.6 L833.8 711.7 L836.0 708.5 L838.0 704.9 L839.9 701.0 L841.6 696.8 L843.1 692.6 L844.2 688.7 L845.0 685.0 L845.3 681.6 L845.3 678.4 L844.9 675.4 L844.4 672.6 L843.7 669.9 L843.0 667.5 L842.3 665.4 L841.4 663.6 L840.4 662.0 L839.3 660.5 L838.2 659.0 L837.0 657.5 L835.7 656.0 L834.4 654.5 L832.9 653.0 L831.5 651.5 L830.0 650.1 L828.6 648.6" fill="none" stroke="#f59a28" stroke-width="1.9" stroke-linecap="round"/>
<g stroke="#111" stroke-width="1" fill="none"><path d="M428.1 548 V565 M428.1 578 V596 M410.5 565.8 L423.3 570 M410.2 577.8 L423.3 573.3 M445.8 565.8 L433 570 M446 577.8 L433 573.3"/></g>
<circle cx="428.1" cy="571.6" r="13" fill="none" stroke="#fff" stroke-width="1.4"/>
<circle cx="428.1" cy="571.6" r="13" fill="none" stroke="#e8323c" stroke-width="1.4" stroke-dasharray="5.105 5.105"/>
<circle cx="428.1" cy="554.3" r="3" fill="#f5a030" stroke="#5a3a10" stroke-width="0.8"/>
</svg>
</div>
<div class="a" style="left:0.0px;top:0.0px;width:1247.0px;height:18.7px;background:#333;"></div>
<div class="a" style="left:1147.0px;top:18.7px;width:100.0px;height:30.3px;background:#333;border-radius:0 0 0 6px;"></div>
<div class="a" style="left:1222.0px;top:49.0px;width:25.0px;height:859.0px;background:#191919;"></div>
<div class="a" style="left:1245.8px;top:49.0px;width:1.2px;height:859.0px;background:#363636;"></div>
<span class="t" style="left:-18.5px;top:0.6px;letter-spacing:-0.53px;">Add</span>
<span class="t" style="left:27.2px;top:0.6px;letter-spacing:-0.47px;">Object</span>
<div class="a" style="left:299.6px;top:-6.0px;width:95.6px;height:19.7px;background:#282828;border-radius:5px;border:1px solid #3a3a3a;"></div>
<svg class="a" style="left:302.0px;top:-2.0px;" width="24" height="14" viewBox="0 0 24 14"><g fill="none" stroke="#e0e0e0" stroke-width="1.3" stroke-linecap="round" stroke-linejoin="round"><circle cx="6.7" cy="9.3" r="1.9"/><path d="M8.7 9.3H20.3M17.6 6.6L20.5 9.3L17.6 12M8 7.8L16 -2M6.7 7.3V-2"/></g></svg>
<span class="t" style="left:332.4px;top:0.6px;letter-spacing:-0.63px;">Global</span>
<svg class="a" style="left:382.1px;top:-1.2px" width="11.6" height="7.9"><path d="M2 2 L5.8 5.9 L9.6 2" fill="none" stroke="#e0e0e0" stroke-width="1.2" stroke-linecap="round" stroke-linejoin="round"/></svg>
<div class="a" style="left:402.8px;top:-6.0px;width:38.5px;height:19.7px;background:#282828;border-radius:5px;border:1px solid #3a3a3a;"></div>
<svg class="a" style="left:405.0px;top:-3.0px;" width="24" height="16" viewBox="0 0 24 16"><g fill="none" stroke="#e0e0e0" stroke-width="1.4" stroke-linecap="round"><path d="M13.5 6.2A5.3 5.3 0 1 1 9.2 2.6"/><path d="M16.2 6.6A6 6 0 0 0 20.2 2.4"/></g><circle cx="12.6" cy="4.6" r="1.9" fill="#e6e6e6"/></svg>
<svg class="a" style="left:427.8px;top:-1.2px" width="11.6" height="7.9"><path d="M2 2 L5.8 5.9 L9.6 2" fill="none" stroke="#e0e0e0" stroke-width="1.2" stroke-linecap="round" stroke-linejoin="round"/></svg>
<div class="a" style="left:448.9px;top:-6.0px;width:23.5px;height:19.7px;background:#545454;border-radius:5px 0 0 5px;"></div>
<div class="a" style="left:472.4px;top:-6.0px;width:39.7px;height:19.7px;background:#282828;border-radius:0 5px 5px 0;border:1px solid #3a3a3a;border-left:none;"></div>
<svg class="a" style="left:449.0px;top:-2.0px;" width="24" height="14" viewBox="0 0 24 14"><g fill="none" stroke="#d8d8d8" stroke-width="1.3" stroke-linejoin="round"><path d="M15 -2 C15 4 14 7 10.3 10.2 L12.6 12.4 C17.6 8.6 18.6 4.5 18.6 -2"/><path d="M2.5 1.5L5.5 4.3L9.5 0.5"/></g></svg>
<svg class="a" style="left:474.0px;top:-1.0px;" width="22" height="12" viewBox="0 0 22 12"><g stroke="#e0e0e0" stroke-width="1.4" fill="none"><path d="M3 2V10.5M18.6 2V10.5M3 6.2H18.6M8 3.8V8.6M13.6 3.8V8.6"/></g></svg>
<svg class="a" style="left:498.9px;top:-1.2px" width="11.6" height="7.9"><path d="M2 2 L5.8 5.9 L9.6 2" fill="none" stroke="#e0e0e0" stroke-width="1.2" stroke-linecap="round" stroke-linejoin="round"/></svg>
<div class="a" style="left:520.0px;top:-6.0px;width:23.7px;height:19.7px;background:#545454;border-radius:5px 0 0 5px;"></div>
<div class="a" style="left:543.7px;top:-6.0px;width:39.2px;height:19.7px;background:#2b2b2b;border-radius:0 5px 5px 0;border:1px solid #3a3a3a;border-left:none;"></div>
<svg class="a" style="left:520.0px;top:-8.0px;" width="24" height="22" viewBox="0 0 24 22"><circle cx="11.1" cy="10" r="8.3" fill="none" stroke="#d0d0d0" stroke-width="1.2" opacity=".8"/><circle cx="11.1" cy="10" r="2.7" fill="#f0f0f0"/></svg>
<svg class="a" style="left:546.0px;top:-2.0px;" width="24" height="14" viewBox="0 0 24 14"><path d="M2 10.5C7 10.5 7.5 2 10 -2M16 -2C18.5 2 19 10.5 21 10.5" fill="none" stroke="#5c5c5c" stroke-width="1.3"/></svg>
<svg class="a" style="left:569.8px;top:-1.2px" width="11.6" height="7.9"><path d="M2 2 L5.8 5.9 L9.6 2" fill="none" stroke="#555" stroke-width="1.2" stroke-linecap="round" stroke-linejoin="round"/></svg>
<div class="a" style="left:927.9px;top:-6.0px;width:38.1px;height:19.7px;background:#282828;border-radius:5px;border:1px solid #3a3a3a;"></div>
<svg class="a" style="left:928.0px;top:-2.0px;" width="24" height="14" viewBox="0 0 24 14"><path d="M3 3.2L12.5 6.8L8.2 8.4L6.6 12.6Z" fill="#e6e6e6"/><path d="M9 1.2C11 3.4 14.5 3.4 16.5 -1" fill="none" stroke="#e6e6e6" stroke-width="1.6"/></svg>
<svg class="a" style="left:952.6px;top:-1.2px" width="11.6" height="7.9"><path d="M2 2 L5.8 5.9 L9.6 2" fill="none" stroke="#e0e0e0" stroke-width="1.2" stroke-linecap="round" stroke-linejoin="round"/></svg>
<div class="a" style="left:974.1px;top:-6.0px;width:22.8px;height:19.7px;background:#4772b3;border-radius:5px 0 0 5px;"></div>
<div class="a" style="left:996.9px;top:-6.0px;width:25.3px;height:19.7px;background:#282828;border-radius:0 5px 5px 0;border:1px solid #3a3a3a;border-left:none;"></div>
<svg class="a" style="left:974.0px;top:-2.0px;" width="24" height="14" viewBox="0 0 24 14"><g fill="none" stroke="#f0f0f0" stroke-width="1.4" stroke-linecap="round"><circle cx="4.8" cy="10.2" r="1.9"/><path d="M6.3 8.8L12.5 1.5M12.3 -2C14.6 1.5 16.4 6 16.8 12"/></g></svg>
<svg class="a" style="left:1003.5px;top:-1.2px" width="11.6" height="7.9"><path d="M2 2 L5.8 5.9 L9.6 2" fill="none" stroke="#e0e0e0" stroke-width="1.2" stroke-linecap="round" stroke-linejoin="round"/></svg>
<div class="a" style="left:1030.1px;top:-6.0px;width:23.0px;height:19.7px;background:#4772b3;border-radius:5px 0 0 5px;"></div>
<div class="a" style="left:1053.1px;top:-6.0px;width:25.0px;height:19.7px;background:#282828;border-radius:0 5px 5px 0;border:1px solid #3a3a3a;border-left:none;"></div>
<svg class="a" style="left:1030.0px;top:-6.0px;" width="24" height="18" viewBox="0 0 24 18"><circle cx="14" cy="6.6" r="5.6" fill="#f0f0f0"/><path d="M13.8 12.4A5.6 5.6 0 1 1 6.9 6.3" fill="none" stroke="#f0f0f0" stroke-width="1.4"/><path d="M12.5 5l2 2M14.5 8.5l1 1" stroke="#4772b3" stroke-width="1"/></svg>
<svg class="a" style="left:1059.7px;top:-1.2px" width="11.6" height="7.9"><path d="M2 2 L5.8 5.9 L9.6 2" fill="none" stroke="#e0e0e0" stroke-width="1.2" stroke-linecap="round" stroke-linejoin="round"/></svg>
<div class="a" style="left:1085.9px;top:-6.0px;width:22.7px;height:19.7px;background:#545454;border-radius:5px;"></div>
<svg class="a" style="left:1086.0px;top:-2.0px;" width="24" height="14" viewBox="0 0 24 14"><g fill="none" stroke="#d8d8d8" stroke-width="1.3"><path d="M3 -2V11.5H15.5V-2"/><path d="M19.5 -2V6.5H17"/><path d="M7 -2V1.5M8.5 3.5H10M12 3.5h1.2" stroke-width="1.2"/></g></svg>
<div class="a" style="left:1117.0px;top:-6.0px;width:23.0px;height:19.7px;background:#545454;border-radius:5px 0 0 5px;"></div>
<div class="a" style="left:1140.0px;top:-6.0px;width:24.0px;height:19.7px;background:#4772b3;border-radius:0;"></div>
<div class="a" style="left:1164.5px;top:-6.0px;width:23.6px;height:19.7px;background:#545454;border-radius:0;"></div>
<div class="a" style="left:1188.6px;top:-6.0px;width:23.5px;height:19.7px;background:#545454;border-radius:0;"></div>
<div class="a" style="left:1212.1px;top:-6.0px;width:24.7px;height:19.7px;background:#282828;border-radius:0 5px 5px 0;border:1px solid #3a3a3a;border-left:none;"></div>
<svg class="a" style="left:1117.0px;top:-8.0px;" width="24" height="22" viewBox="0 0 24 22"><g fill="none" stroke="#cfcfcf" stroke-width="1.2"><circle cx="11.4" cy="9.6" r="8.4"/><path d="M11.4 1V18M3 12.2H19.8"/></g></svg>
<svg class="a" style="left:1140.0px;top:-8.0px;" width="24" height="22" viewBox="0 0 24 22"><circle cx="12" cy="9.4" r="8.4" fill="#dbe4f1"/></svg>
<svg class="a" style="left:1164.0px;top:-8.0px;" width="24" height="22" viewBox="0 0 24 22"><g><circle cx="12" cy="9.6" r="8.4" fill="none" stroke="#cfcfcf" stroke-width="1.2"/><path d="M12 9.6V1.2A8.4 8.4 0 0 0 3.6 9.6Z" fill="#bbb"/><path d="M14 16.5l5-5M16.5 17l3-3.5" stroke="#cfcfcf" stroke-width="1.1"/></g></svg>
<svg class="a" style="left:1188.0px;top:-8.0px;" width="24" height="22" viewBox="0 0 24 22"><g><circle cx="12" cy="9.6" r="8.4" fill="none" stroke="#cfcfcf" stroke-width="1.2"/><path d="M6.5 8.2l1.5-1.5" stroke="#cfcfcf" stroke-width="1.6"/><path d="M13 17l5.5-5M15.5 17.2l3.5-4M11 16.8l6-6" stroke="#cfcfcf" stroke-width="1"/></g></svg>
<svg class="a" style="left:1218.7px;top:-1.2px" width="11.6" height="7.9"><path d="M2 2 L5.8 5.9 L9.6 2" fill="none" stroke="#e0e0e0" stroke-width="1.2" stroke-linecap="round" stroke-linejoin="round"/></svg>
<div class="a" style="left:1157.8px;top:21.8px;width:80.3px;height:23.8px;background:#282828;border-radius:4.5px;border:1px solid #3a3a3a;"></div>
<span class="t" style="left:1166.5px;top:33.5px;letter-spacing:-0.35px;">Options</span>
<svg class="a" style="left:1224.3px;top:30.7px" width="11.4" height="7.9"><path d="M2 2 L5.7 5.9 L9.4 2" fill="none" stroke="#e0e0e0" stroke-width="1.2" stroke-linecap="round" stroke-linejoin="round"/></svg>
<div class="a" style="left:1222.0px;top:54.8px;width:22.0px;height:50.7px;background:#333;border-radius:0 5px 5px 0;border:1px solid #2e2e2e;border-left:none;"></div><span class="t" style="left:1235.2px;top:80.1px;transform:translate(-50%,0) rotate(90deg);letter-spacing:-0.1px;color:#f0f0f0">Item</span>
<div class="a" style="left:1222.0px;top:111.2px;width:22.0px;height:48.4px;background:#1f1f1f;border-radius:0 5px 5px 0;border:1px solid #2e2e2e;border-left:none;"></div><span class="t" style="left:1235.2px;top:135.6px;transform:translate(-50%,0) rotate(90deg);letter-spacing:-0.1px;color:#c8c8c8">Tool</span>
<div class="a" style="left:1222.0px;top:165.1px;width:22.0px;height:50.3px;background:#1f1f1f;border-radius:0 5px 5px 0;border:1px solid #2e2e2e;border-left:none;"></div><span class="t" style="left:1235.2px;top:190px;transform:translate(-50%,0) rotate(90deg);letter-spacing:-0.1px;color:#c8c8c8">View</span>
<svg class="a" style="left:760.0px;top:60.0px;" width="130" height="110" viewBox="0 0 130 110"><g stroke-linecap="round">
<circle cx="47.4" cy="44.2" r="9" fill="#59383f" stroke="#a33a4a" stroke-width="1.2"/>
<line x1="76" y1="50.8" x2="103.7" y2="44.2" stroke="#6b9a1f" stroke-width="2"/>
<circle cx="103.7" cy="44.2" r="9.8" fill="#6b9a1f"/>
<text x="103.7" y="48.9" font-size="12.5" font-weight="bold" text-anchor="middle" fill="#1c2a08" font-family="Liberation Sans, sans-serif">Y</text>
<line x1="76" y1="50.8" x2="104.6" y2="57.1" stroke="#ee3c59" stroke-width="2"/>
<line x1="76" y1="50.8" x2="76" y2="12" stroke="#3583e2" stroke-width="2"/>
<circle cx="104.6" cy="57.1" r="10.5" fill="#ee3a57"/>
<text x="104.6" y="61.8" font-size="13" text-anchor="middle" fill="#3a0a14" font-family="Liberation Sans, sans-serif" font-weight="bold">X</text>
<circle cx="76" cy="11.8" r="10.2" fill="#2f83e4"/>
<text x="76" y="16.4" font-size="13" text-anchor="middle" fill="#071a33" font-family="Liberation Sans, sans-serif" font-weight="bold">Z</text>
<circle cx="48.1" cy="57.4" r="9.9" fill="#4f6a26" stroke="#8cc51e" stroke-width="1.4"/>
<circle cx="76" cy="89.8" r="9.3" fill="#3a5174" stroke="#2f7fde" stroke-width="1.2"/>
</g></svg>
<svg class="a" style="left:853.2px;top:162.6px;" width="34" height="34" viewBox="0 0 34 34"><circle cx="17" cy="17" r="16.6" fill="#292929"/><path d="M13.800 20.400L7.800 26" stroke="#d2d2d2" stroke-width="2.800" stroke-linecap="round"/><circle cx="19.400" cy="14.600" r="8" fill="#d2d2d2"/><path d="M19.400 10.800v7.600M15.600 14.600h7.600" stroke="#292929" stroke-width="1.400"/></svg>
<svg class="a" style="left:853.2px;top:199.9px;" width="34" height="34" viewBox="0 0 34 34"><circle cx="17" cy="17" r="16.6" fill="#292929"/><g transform="translate(18.2 19) scale(1.16) translate(-16.800 -17.600)"><path d="M9.200 17.500c-.9-1.600-2.200-3.600-1-4.300 1.200-.7 2.400 1.300 3.400 2.600l-1-7.300c-.2-1.800 2-2 2.300-.3l1 5.800.2-7.300c0-1.700 2.400-1.700 2.400 0l.3 7.300 1.400-6.200c.4-1.600 2.500-1.100 2.200.5l-1.100 6.700 2-3.800c.8-1.400 2.600-.5 2 .9-1.300 3.200-2.200 6-3 8.400-.8 2.400-2.100 3.300-5.200 3.300-3.600 0-4.700-2.600-5.900-6.300z" fill="#d2d2d2"/></g></svg>
<svg class="a" style="left:853.2px;top:237.6px;" width="34" height="34" viewBox="0 0 34 34"><circle cx="17" cy="17" r="16.6" fill="#292929"/><g fill="none" stroke="#d2d2d2" stroke-width="1.500" stroke-linejoin="round"><path d="M10 17.600A3.700 3.700 0 0 1 11.600 10.200A3.800 3.800 0 0 1 15.800 10A5 5 0 1 1 22.800 17.600Z"/><circle cx="11.600" cy="13.800" r="1" fill="#d2d2d2"/><circle cx="20.600" cy="12.600" r="1.300" fill="#d2d2d2"/><rect x="11.800" y="20.200" width="9.400" height="6.600" rx="1"/><path d="M22.600 23.500L27.200 20.600V26.600Z"/><path d="M8.600 21.600H10.800"/></g></svg>
<svg class="a" style="left:853.2px;top:275.3px;" width="34" height="34" viewBox="0 0 34 34"><circle cx="17" cy="17" r="16.6" fill="#292929"/><g fill="none" stroke="#d6d6d6" stroke-width="1.5" stroke-linejoin="round"><path d="M11.7 8.6H22.3L26.8 24.6H7.2Z"/><path d="M15.3 8.6L13.8 24.6M18.8 8.6L20.3 24.6M10.3 13.6H23.7M8.9 18.6H25.1"/></g></svg>
<div class="a" style="left:908.4px;top:51.4px;width:305.6px;height:482.2px;background:#3d3d3d;border-radius:6px;"></div>
<svg class="a" style="left:917.0px;top:62.6px" width="14.0" height="9.0"><path d="M2 2 L7.0 7.0 L12.0 2" fill="none" stroke="#dcdcdc" stroke-width="1.3" stroke-linecap="round" stroke-linejoin="round"/></svg>
<span class="t" style="left:935.8px;top:67.3px;letter-spacing:-0.45px;">Transform</span>
<svg class="a" style="left:1189.8px;top:64.0px;" width="16" height="8" viewBox="0 0 16 8"><rect x="0.0" y="0.0" width="1.9" height="1.9" fill="#a6a6a6"/><rect x="0.0" y="3.9" width="1.9" height="1.9" fill="#a6a6a6"/><rect x="4.1" y="0.0" width="1.9" height="1.9" fill="#a6a6a6"/><rect x="4.1" y="3.9" width="1.9" height="1.9" fill="#a6a6a6"/><rect x="8.2" y="0.0" width="1.9" height="1.9" fill="#a6a6a6"/><rect x="8.2" y="3.9" width="1.9" height="1.9" fill="#a6a6a6"/><rect x="12.3" y="0.0" width="1.9" height="1.9" fill="#a6a6a6"/><rect x="12.3" y="3.9" width="1.9" height="1.9" fill="#a6a6a6"/></svg>
<span class="t" style="left:919.2px;top:103.6px;color:#dedede;letter-spacing:-0.50px;">Location:</span><div class="a" style="left:919.2px;top:117.0px;width:217.7px;height:23.8px;background:#545454;border-radius:4px 4px 0 0;"></div><span class="t" style="left:938.6px;top:128.6px;letter-spacing:-0.50px;">X</span><span class="t" style="left:1094.9px;top:128.6px;letter-spacing:-0.51px;">0 m</span><svg class="a" style="left:1166.0px;top:120.6px;" width="19" height="17" viewBox="0 0 19 17"><g fill="none" stroke="#cfcfcf" stroke-width="1.25" stroke-linejoin="round"><rect x="6.6" y="7.8" width="10.2" height="7.4" rx="1"/><path d="M7.4 7.6V5.4A3.3 3.3 0 0 0 0.8 5.4V6.6"/><rect x="11" y="10.8" width="1.6" height="1.6" fill="#cfcfcf" stroke-width="1"/></g></svg><div class="a" style="left:919.2px;top:141.6px;width:217.7px;height:23.8px;background:#545454;border-radius:0;"></div><span class="t" style="left:938.6px;top:153.2px;letter-spacing:-0.50px;">Y</span><span class="t" style="left:1094.9px;top:153.2px;letter-spacing:-0.51px;">0 m</span><svg class="a" style="left:1166.0px;top:145.2px;" width="19" height="17" viewBox="0 0 19 17"><g fill="none" stroke="#cfcfcf" stroke-width="1.25" stroke-linejoin="round"><rect x="6.6" y="7.8" width="10.2" height="7.4" rx="1"/><path d="M7.4 7.6V5.4A3.3 3.3 0 0 0 0.8 5.4V6.6"/><rect x="11" y="10.8" width="1.6" height="1.6" fill="#cfcfcf" stroke-width="1"/></g></svg><div class="a" style="left:919.2px;top:166.2px;width:217.7px;height:23.8px;background:#545454;border-radius:0 0 4px 4px;"></div><span class="t" style="left:938.6px;top:177.8px;letter-spacing:-0.50px;">Z</span><span class="t" style="left:1055.3px;top:177.8px;letter-spacing:-0.03px;">0.0005 m</span><svg class="a" style="left:1166.0px;top:169.8px;" width="19" height="17" viewBox="0 0 19 17"><g fill="none" stroke="#cfcfcf" stroke-width="1.25" stroke-linejoin="round"><rect x="6.6" y="7.8" width="10.2" height="7.4" rx="1"/><path d="M7.4 7.6V5.4A3.3 3.3 0 0 0 0.8 5.4V6.6"/><rect x="11" y="10.8" width="1.6" height="1.6" fill="#cfcfcf" stroke-width="1"/></g></svg>
<span class="t" style="left:919.2px;top:205.9px;color:#dedede;letter-spacing:-0.50px;">Rotation:</span><div class="a" style="left:919.2px;top:219.0px;width:217.7px;height:23.8px;background:#545454;border-radius:4px 4px 0 0;"></div><span class="t" style="left:938.6px;top:230.6px;letter-spacing:-0.50px;">X</span><span class="t" style="left:1104.8px;top:230.6px;letter-spacing:0.09px;">0°</span><svg class="a" style="left:1166.0px;top:222.6px;" width="19" height="17" viewBox="0 0 19 17"><g fill="none" stroke="#cfcfcf" stroke-width="1.25" stroke-linejoin="round"><rect x="6.6" y="7.8" width="10.2" height="7.4" rx="1"/><path d="M7.4 7.6V5.4A3.3 3.3 0 0 0 0.8 5.4V6.6"/><rect x="11" y="10.8" width="1.6" height="1.6" fill="#cfcfcf" stroke-width="1"/></g></svg><div class="a" style="left:919.2px;top:243.6px;width:217.7px;height:23.8px;background:#545454;border-radius:0;"></div><span class="t" style="left:938.6px;top:255.2px;letter-spacing:-0.50px;">Y</span><span class="t" style="left:1104.8px;top:255.2px;letter-spacing:0.09px;">0°</span><svg class="a" style="left:1166.0px;top:247.2px;" width="19" height="17" viewBox="0 0 19 17"><g fill="none" stroke="#cfcfcf" stroke-width="1.25" stroke-linejoin="round"><rect x="6.6" y="7.8" width="10.2" height="7.4" rx="1"/><path d="M7.4 7.6V5.4A3.3 3.3 0 0 0 0.8 5.4V6.6"/><rect x="11" y="10.8" width="1.6" height="1.6" fill="#cfcfcf" stroke-width="1"/></g></svg><div class="a" style="left:919.2px;top:268.2px;width:217.7px;height:23.8px;background:#545454;border-radius:0 0 4px 4px;"></div><span class="t" style="left:938.6px;top:279.8px;letter-spacing:-0.50px;">Z</span><span class="t" style="left:1104.8px;top:279.8px;letter-spacing:0.09px;">0°</span><svg class="a" style="left:1166.0px;top:271.8px;" width="19" height="17" viewBox="0 0 19 17"><g fill="none" stroke="#cfcfcf" stroke-width="1.25" stroke-linejoin="round"><rect x="6.6" y="7.8" width="10.2" height="7.4" rx="1"/><path d="M7.4 7.6V5.4A3.3 3.3 0 0 0 0.8 5.4V6.6"/><rect x="11" y="10.8" width="1.6" height="1.6" fill="#cfcfcf" stroke-width="1"/></g></svg>
<div class="a" style="left:919.2px;top:297.2px;width:282.4px;height:22.4px;background:#282828;border-radius:4px;"></div>
<span class="t" style="left:928.0px;top:308.3px;letter-spacing:-0.63px;">XYZ Euler</span>
<svg class="a" style="left:1188.9px;top:305.8px" width="11.6" height="7.8"><path d="M2 2 L5.8 5.8 L9.6 2" fill="none" stroke="#dcdcdc" stroke-width="1.2" stroke-linecap="round" stroke-linejoin="round"/></svg>
<span class="t" style="left:919.2px;top:335.6px;color:#dedede;letter-spacing:-0.50px;">Scale:</span><div class="a" style="left:919.2px;top:349.3px;width:217.7px;height:23.8px;background:#545454;border-radius:4px 4px 0 0;"></div><span class="t" style="left:938.6px;top:360.9px;letter-spacing:-0.50px;">X</span><span class="t" style="left:1080.3px;top:360.9px;letter-spacing:0.14px;">1.000</span><svg class="a" style="left:1166.0px;top:352.9px;" width="19" height="17" viewBox="0 0 19 17"><g fill="none" stroke="#cfcfcf" stroke-width="1.25" stroke-linejoin="round"><rect x="6.6" y="7.8" width="10.2" height="7.4" rx="1"/><path d="M7.4 7.6V5.4A3.3 3.3 0 0 0 0.8 5.4V6.6"/><rect x="11" y="10.8" width="1.6" height="1.6" fill="#cfcfcf" stroke-width="1"/></g></svg><div class="a" style="left:919.2px;top:373.9px;width:217.7px;height:23.8px;background:#545454;border-radius:0;"></div><span class="t" style="left:938.6px;top:385.5px;letter-spacing:-0.50px;">Y</span><span class="t" style="left:1080.3px;top:385.5px;letter-spacing:0.14px;">1.000</span><svg class="a" style="left:1166.0px;top:377.5px;" width="19" height="17" viewBox="0 0 19 17"><g fill="none" stroke="#cfcfcf" stroke-width="1.25" stroke-linejoin="round"><rect x="6.6" y="7.8" width="10.2" height="7.4" rx="1"/><path d="M7.4 7.6V5.4A3.3 3.3 0 0 0 0.8 5.4V6.6"/><rect x="11" y="10.8" width="1.6" height="1.6" fill="#cfcfcf" stroke-width="1"/></g></svg><div class="a" style="left:919.2px;top:398.5px;width:217.7px;height:23.8px;background:#545454;border-radius:0 0 4px 4px;"></div><span class="t" style="left:938.6px;top:410.1px;letter-spacing:-0.50px;">Z</span><span class="t" style="left:1080.3px;top:410.1px;letter-spacing:0.14px;">1.000</span><svg class="a" style="left:1166.0px;top:402.1px;" width="19" height="17" viewBox="0 0 19 17"><g fill="none" stroke="#cfcfcf" stroke-width="1.25" stroke-linejoin="round"><rect x="6.6" y="7.8" width="10.2" height="7.4" rx="1"/><path d="M7.4 7.6V5.4A3.3 3.3 0 0 0 0.8 5.4V6.6"/><rect x="11" y="10.8" width="1.6" height="1.6" fill="#cfcfcf" stroke-width="1"/></g></svg>
<span class="t" style="left:919.2px;top:437.3px;color:#dedede;letter-spacing:-0.50px;">Dimensions:</span><div class="a" style="left:919.2px;top:451.3px;width:282.4px;height:23.8px;background:#545454;border-radius:4px 4px 0 0;"></div><span class="t" style="left:938.6px;top:462.9px;letter-spacing:-0.50px;">X</span><span class="t" style="left:1119.9px;top:462.9px;letter-spacing:-0.02px;">0.0219 m</span><div class="a" style="left:919.2px;top:475.9px;width:282.4px;height:23.8px;background:#545454;border-radius:0;"></div><span class="t" style="left:938.6px;top:487.5px;letter-spacing:-0.50px;">Y</span><span class="t" style="left:1119.9px;top:487.5px;letter-spacing:-0.02px;">0.0103 m</span><div class="a" style="left:919.2px;top:500.5px;width:282.4px;height:23.8px;background:#545454;border-radius:0 0 4px 4px;"></div><span class="t" style="left:938.6px;top:512.1px;letter-spacing:-0.50px;">Z</span><span class="t" style="left:1111.4px;top:512.1px;letter-spacing:-0.03px;">0.00086 m</span>
<div class="a" style="left:11.4px;top:374.0px;width:288.6px;height:546.0px;background:#181818;border-radius:5.5px;box-shadow:0 2px 8px rgba(0,0,0,.35);"></div>
<span class="t" style="left:22.3px;top:391.9px;color:#999;letter-spacing:-0.38px;">Object</span>
<div class="a" style="left:20.0px;top:408.1px;width:271.0px;height:1.1px;background:#2e2e2e;"></div>
<span class="t" style="left:53.3px;top:424.9px;color:#e4e4e4;letter-spacing:-0.56px;"><u>A</u>djust Extrusion</span>
<span class="t" style="left:53.3px;top:449.9px;color:#e4e4e4;letter-spacing:-0.34px;">Adjust <u>O</u>ffset</span>
<div class="a" style="left:20.0px;top:465.8px;width:271.0px;height:1.1px;background:#2e2e2e;"></div>
<div class="a" style="left:16.0px;top:472.1px;width:278.0px;height:22.8px;background:#404040;border-radius:4.5px;"></div>
<span class="t" style="left:53.3px;top:482.9px;color:#e4e4e4;letter-spacing:-0.71px;"><u>S</u>hade Smooth</span>
<span class="t" style="left:53.3px;top:507.9px;color:#e4e4e4;letter-spacing:-0.60px;">Shade <u>F</u>lat</span>
<div class="a" style="left:20.0px;top:524.0px;width:271.0px;height:1.1px;background:#2e2e2e;"></div>
<span class="t" style="left:53.3px;top:540.9px;color:#e4e4e4;letter-spacing:-0.50px;"><u>C</u>onvert</span>
<svg class="a" style="left:281.5px;top:536.8px;" width="8" height="9" viewBox="0 0 8 9"><path d="M0.5 0.6L7 4.4L0.5 8.2Z" fill="#9a9a9a"/></svg>
<span class="t" style="left:53.3px;top:565.9px;color:#e4e4e4;letter-spacing:-0.54px;">S<u>e</u>t Origin</span>
<svg class="a" style="left:281.5px;top:561.8px;" width="8" height="9" viewBox="0 0 8 9"><path d="M0.5 0.6L7 4.4L0.5 8.2Z" fill="#9a9a9a"/></svg>
<div class="a" style="left:20.0px;top:581.9px;width:271.0px;height:1.1px;background:#2e2e2e;"></div>
<span class="t" style="left:53.3px;top:598.9px;color:#e4e4e4;letter-spacing:-0.42px;">Cop<u>y</u> Objects</span>
<span class="t" style="left:242.9px;top:598.9px;color:#868686;letter-spacing:-0.50px;">Ctrl C</span>
<span class="t" style="left:53.3px;top:623.9px;color:#e4e4e4;letter-spacing:-0.42px;"><u>P</u>aste Objects</span>
<span class="t" style="left:243.7px;top:623.9px;color:#868686;letter-spacing:-0.50px;">Ctrl V</span>
<div class="a" style="left:20.0px;top:639.9px;width:271.0px;height:1.1px;background:#2e2e2e;"></div>
<span class="t" style="left:53.3px;top:656.9px;color:#e4e4e4;letter-spacing:-0.32px;"><u>D</u>uplicate Objects</span>
<span class="t" style="left:236.5px;top:656.9px;color:#868686;letter-spacing:-0.50px;">Shift D</span>
<span class="t" style="left:53.3px;top:681.9px;color:#e4e4e4;letter-spacing:-0.35px;">Duplicate <u>L</u>inked</span>
<span class="t" style="left:248.4px;top:681.9px;color:#868686;letter-spacing:-0.50px;">Alt D</span>
<div class="a" style="left:20.0px;top:697.9px;width:271.0px;height:1.1px;background:#2e2e2e;"></div>
<span class="t" style="left:53.3px;top:714.9px;color:#e4e4e4;letter-spacing:-0.40px;"><u>R</u>ename Active Object...</span>
<span class="t" style="left:262.4px;top:714.9px;color:#868686;letter-spacing:-0.50px;">F2</span>
<div class="a" style="left:20.0px;top:730.9px;width:271.0px;height:1.1px;background:#2e2e2e;"></div>
<span class="t" style="left:53.3px;top:747.9px;color:#e4e4e4;letter-spacing:-0.41px;"><u>M</u>irror</span>
<svg class="a" style="left:281.5px;top:743.8px;" width="8" height="9" viewBox="0 0 8 9"><path d="M0.5 0.6L7 4.4L0.5 8.2Z" fill="#9a9a9a"/></svg>
<span class="t" style="left:53.3px;top:772.9px;color:#e4e4e4;letter-spacing:-0.80px;">S<u>n</u>ap</span>
<svg class="a" style="left:281.5px;top:768.8px;" width="8" height="9" viewBox="0 0 8 9"><path d="M0.5 0.6L7 4.4L0.5 8.2Z" fill="#9a9a9a"/></svg>
<span class="t" style="left:53.3px;top:797.9px;color:#e4e4e4;letter-spacing:-0.44px;">Parent</span>
<svg class="a" style="left:281.5px;top:793.8px;" width="8" height="9" viewBox="0 0 8 9"><path d="M0.5 0.6L7 4.4L0.5 8.2Z" fill="#9a9a9a"/></svg>
<span class="t" style="left:53.3px;top:822.9px;color:#e4e4e4;letter-spacing:-0.25px;">Move <u>t</u>o Collection</span>
<span class="t" style="left:267.1px;top:822.9px;color:#868686;letter-spacing:-0.50px;">M</span>
<div class="a" style="left:20.0px;top:838.9px;width:271.0px;height:1.1px;background:#2e2e2e;"></div>
<span class="t" style="left:53.3px;top:855.9px;color:#e4e4e4;letter-spacing:-0.23px;"><u>I</u>nsert Keyframe</span>
<span class="t" style="left:275.7px;top:855.9px;color:#868686;letter-spacing:-0.50px;">I</span>
<span class="t" style="left:53.3px;top:880.9px;color:#e4e4e4;letter-spacing:-0.32px;">Insert <u>K</u>eyframe with Keying Set</span>
<span class="t" style="left:269.7px;top:880.9px;color:#868686;letter-spacing:-0.50px;">K</span>
<div class="a" style="left:20.0px;top:896.9px;width:271.0px;height:1.1px;background:#2e2e2e;"></div>
<svg class="a" style="left:24.0px;top:588.0px;" width="22" height="22" viewBox="0 0 22 22"><path d="M6.9 6.400H10.200L11.600 3.300H15.300L16.700 6.400H20V17.600H6.900Z" fill="#7c7c7c"/><path d="M10.800 5.400H16.100" stroke="#181818" stroke-width="1"/><path d="M2.300 20.300L10.700 12.600M6 12.300H11.100V17.200" fill="none" stroke="#e0e0e0" stroke-width="1.400"/></svg>
<svg class="a" style="left:24.0px;top:613.0px;" width="22" height="22" viewBox="0 0 22 22"><path d="M2 5.200H5L6.600 2.400H10.400L12 5.200H15.200V17.900H2Z" fill="#7c7c7c"/><path d="M5.800 4.400H11.200" stroke="#181818" stroke-width="1"/><path d="M11.300 11.800L18.800 19.400M19.100 14.400V19.800H13.900" fill="none" stroke="#e0e0e0" stroke-width="1.400"/></svg>
<svg class="a" style="left:24.0px;top:646.0px;" width="22" height="22" viewBox="0 0 22 22"><g fill="none" stroke-width="1.400" stroke-linejoin="round"><path d="M6.500 8.400H2.900V19.600H15.200V17.200" stroke="#808080"/><path d="M7.800 3.600H15.500L19.500 7.600V15.300H7.800Z" stroke="#d8d8d8"/><path d="M15.500 3.600V7.600H19.500Z" fill="#d8d8d8" stroke="#d8d8d8" stroke-width=".6"/></g></svg>
<div class="a" style="left:98.4px;top:508.4px;width:480.0px;height:39.0px;background:#1d1d1d;border-radius:5px;box-shadow:0 1px 5px rgba(0,0,0,.3);border:1px solid #242424;"></div>
<span class="t" style="left:113.9px;top:527.6px;color:#e2e2e2;letter-spacing:-0.38px;">Render and display faces smooth, using interpolated vertex normals.</span>
<div class="a" style="left:1250.0px;top:-8.0px;width:329.6px;height:155.2px;background:#282828;border-radius:6px;"></div>
<div class="a" style="left:1250.0px;top:35.0px;width:329.6px;height:25.0px;background:#2b2b2b;"></div>
<div class="a" style="left:1250.0px;top:85.0px;width:329.6px;height:25.0px;background:#2b2b2b;"></div>
<div class="a" style="left:1250.0px;top:110.0px;width:329.6px;height:25.0px;background:#334b7d;"></div>
<div class="a" style="left:1249.9px;top:0.0px;width:1.0px;height:142.0px;background:#383838;"></div>
<div class="a" style="left:1574.2px;top:35.5px;width:4.4px;height:95.0px;background:#3b3b3b;border-radius:2.2px;"></div>
<div class="a" style="left:1260.2px;top:-6.0px;width:39.5px;height:19.7px;background:#282828;border-radius:5px;border:1px solid #3c3c3c;"></div>
<svg class="a" style="left:1262.0px;top:0.0px;" width="26" height="14" viewBox="0 0 26 14"><g fill="none" stroke="#b8b8b8" stroke-width="1.2"><path d="M7.4 -2V9.2H11M7.4 3.3H11"/></g><rect x="12.9" y="1.4" width="9.2" height="3.7" rx="1.2" fill="#ececec"/><rect x="12.9" y="7" width="9.2" height="3.7" rx="1.2" fill="#ececec"/></svg>
<svg class="a" style="left:1286.0px;top:-1.2px" width="11.6" height="7.9"><path d="M2 2 L5.8 5.9 L9.6 2" fill="none" stroke="#e0e0e0" stroke-width="1.2" stroke-linecap="round" stroke-linejoin="round"/></svg>
<div class="a" style="left:1306.3px;top:-6.0px;width:39.5px;height:19.7px;background:#282828;border-radius:5px;border:1px solid #3c3c3c;"></div>
<svg class="a" style="left:1308.0px;top:-2.0px;" width="26" height="15" viewBox="0 0 26 15"><g fill="none" stroke="#9a9a9a" stroke-width="1.2"><path d="M4.6 0V12.6H17"/><path d="M6.6 0V10.6H19"/></g><path d="M9 -3H21.6V8.4H9Z" fill="#d8d8d8"/><path d="M10.2 7.2L14.2 1.2L18.5 7.2Z" fill="#282828" opacity=".8"/></svg>
<svg class="a" style="left:1331.6px;top:-1.2px" width="11.6" height="7.9"><path d="M2 2 L5.8 5.9 L9.6 2" fill="none" stroke="#e0e0e0" stroke-width="1.2" stroke-linecap="round" stroke-linejoin="round"/></svg>
<div class="a" style="left:1365.6px;top:-6.0px;width:147.3px;height:19.5px;background:#1d1d1d;border-radius:5px;border:1px solid #3c3c3c;"></div>
<svg class="a" style="left:1369.0px;top:-5.0px;" width="24" height="18" viewBox="0 0 24 18"><g fill="none" stroke="#e0e0e0" stroke-width="1.5" stroke-linecap="round"><circle cx="13.3" cy="4" r="5.6"/><path d="M9.2 8.2L3.3 14.3"/></g></svg>
<span class="t" style="left:1398.5px;top:0.5px;color:#6a6a6a;letter-spacing:-0.69px;">Search</span>
<div class="a" style="left:1532.3px;top:-6.0px;width:39.5px;height:19.7px;background:#282828;border-radius:5px;border:1px solid #3c3c3c;"></div>
<svg class="a" style="left:1538.0px;top:-3.0px;" width="14" height="15" viewBox="0 0 14 15"><path d="M0.600 0.600L3.750 5.050V13.300L8.400 9.660V5.050L11.600 0.600" fill="none" stroke="#e0e0e0" stroke-width="1.300" stroke-linejoin="miter"/></svg>
<svg class="a" style="left:1557.7px;top:-1.2px" width="11.6" height="7.9"><path d="M2 2 L5.8 5.9 L9.6 2" fill="none" stroke="#e0e0e0" stroke-width="1.2" stroke-linecap="round" stroke-linejoin="round"/></svg>
<div class="a" style="left:1275.4px;top:16.8px;width:24.3px;height:16.0px;background:#555;border-radius:0 0 6px 6px;"></div>
<svg class="a" style="left:1277.5px;top:14.0px;" width="20" height="17" viewBox="0 0 20 17"><path d="M2 5.400H17.600V15.500H2Z" fill="#e9e9e9"/><path d="M1.600 2.600H18V4.200H1.600Z" fill="#cfcfcf"/><rect x="7" y="7.200" width="4.800" height="1.700" rx=".85" fill="#444"/></svg>
<span class="t" style="left:1305.8px;top:24.1px;letter-spacing:-0.43px;">Scene Collection</span>
<svg class="a" style="left:1283.0px;top:41.0px;" width="10" height="14" viewBox="0 0 10 14"><path d="M1.5 1.5L7.6 7L1.5 12.5" fill="none" stroke="#777" stroke-width="1.3" stroke-linecap="round" stroke-linejoin="round"/></svg>
<svg class="a" style="left:1302.0px;top:38.0px;" width="20" height="20" viewBox="0 0 20 20"><path d="M5.4 3.4C10.6 1.200 16.4 3.400 16.400 9C16.400 14.800 9.400 16.400 3.400 16.800" fill="none" stroke="#8c633f" stroke-width="3.6" stroke-linecap="round"/></svg>
<span class="t" style="left:1330.2px;top:49.0px;color:#8c8c8c;letter-spacing:-0.44px;">Circle</span>
<svg class="a" style="left:1394.0px;top:36.7px;" width="22.8" height="22.8" viewBox="0 0 20 20"><g fill="none" stroke="#217a64" stroke-width="1.2"><rect x="4.7" y="2.6" width="3.6" height="3.6" rx=".6"/><rect x="1.4" y="12.6" width="3.6" height="3.6" rx=".6"/><path d="M8.3 4.2C14 3.4 16.8 6.8 15.6 10.4C14.6 13.4 10 14.6 5 14.4"/></g></svg>
<svg class="a" style="left:1523.0px;top:42.0px;" width="20" height="16" viewBox="0 0 20 16"><path d="M1.400 5.600C4.600 10.600 7.600 11.600 10 11.600C12.400 11.600 15.400 10.600 18.600 5.600" fill="none" stroke="#c8c8c8" stroke-width="1.200" stroke-linecap="round"/></svg>
<svg class="a" style="left:1548.2px;top:39.4px;" width="18.6" height="16.8" viewBox="0 0 20 18"><path d="M1 4.600H5L6.400 1.800H13.600L15 4.600H19V16H1Z" fill="#e6e6e6" stroke="#e6e6e6" stroke-width="1" stroke-linejoin="round"/><circle cx="10" cy="9.800" r="4.700" fill="none" stroke="#282828" stroke-width="1.300"/><circle cx="10" cy="9.800" r="2.300" fill="none" stroke="#282828" stroke-width="1.200"/></svg>
<svg class="a" style="left:1283.0px;top:66.0px;" width="10" height="14" viewBox="0 0 10 14"><path d="M1.5 1.5L7.6 7L1.5 12.5" fill="none" stroke="#777" stroke-width="1.3" stroke-linecap="round" stroke-linejoin="round"/></svg>
<svg class="a" style="left:1302.0px;top:63.0px;" width="20" height="20" viewBox="0 0 20 20"><rect x="1.2" y="1.2" width="17.6" height="17.6" rx="2.2" fill="#7d5636"/><path d="M3.2 16.6L8.8 7.4L14.6 16.6Z" fill="#2b2b2b"/><circle cx="13.8" cy="6.2" r="1.9" fill="#2b2b2b"/></svg>
<span class="t" style="left:1330.2px;top:74.0px;color:#8c8c8c;letter-spacing:-0.79px;">Empty</span>
<svg class="a" style="left:1398.4px;top:63.0px;" width="20" height="20" viewBox="0 0 20 20"><path d="M13.5 17.600H2.6A1.4 1.4 0 0 1 1.200 16.200V3.4A1.4 1.4 0 0 1 2.6 2H16A1.4 1.4 0 0 1 17.400 3.400V16.2A1.4 1.4 0 0 1 16.400 17.600" fill="none" stroke="#6e3c44" stroke-width="1.3"/><path d="M2.600 16.4L7.800 8L13 16.4Z" fill="#6e3c44"/><circle cx="12.400" cy="6.400" r="1.500" fill="#6e3c44"/></svg>
<svg class="a" style="left:1523.0px;top:67.0px;" width="20" height="16" viewBox="0 0 20 16"><path d="M1.400 5.600C4.600 10.600 7.600 11.600 10 11.600C12.400 11.600 15.400 10.600 18.600 5.600" fill="none" stroke="#c8c8c8" stroke-width="1.200" stroke-linecap="round"/></svg>
<svg class="a" style="left:1548.2px;top:64.4px;" width="18.6" height="16.8" viewBox="0 0 20 18"><path d="M1 4.600H5L6.400 1.800H13.600L15 4.600H19V16H1Z" fill="#e6e6e6" stroke="#e6e6e6" stroke-width="1" stroke-linejoin="round"/><circle cx="10" cy="9.800" r="4.700" fill="none" stroke="#282828" stroke-width="1.300"/><circle cx="10" cy="9.800" r="2.300" fill="none" stroke="#282828" stroke-width="1.200"/></svg>
<svg class="a" style="left:1283.0px;top:91.0px;" width="10" height="14" viewBox="0 0 10 14"><path d="M1.5 1.5L7.6 7L1.5 12.5" fill="none" stroke="#e0e0e0" stroke-width="1.3" stroke-linecap="round" stroke-linejoin="round"/></svg>
<svg class="a" style="left:1302.0px;top:88.0px;" width="20" height="20" viewBox="0 0 20 20"><path d="M2.6 3.2H17.4L10 17.2Z" fill="none" stroke="#e39a5c" stroke-width="3" stroke-linejoin="round"/></svg>
<span class="t" style="left:1330.2px;top:99.0px;letter-spacing:-0.63px;">Plane</span>
<svg class="a" style="left:1394.0px;top:88.0px;" width="20" height="20" viewBox="0 0 20 20"><path d="M12.8 2.200A4.600 4.600 0 0 0 9.300 8.800L2.500 15.100A1.700 1.700 0 0 0 5 17.600L11.600 11.200A4.600 4.600 0 0 0 17.800 6.600L15 9L12.400 8.400L11.800 5.600Z" fill="none" stroke="#5e8ee0" stroke-width="1.4" stroke-linejoin="round"/></svg>
<svg class="a" style="left:1419.0px;top:88.0px;" width="20" height="20" viewBox="0 0 20 20"><g fill="none" stroke="#1fc795" stroke-width="1.3"><path d="M4.200 4.200H15.800M4 5L9.200 15M16 5L10.800 15"/><rect x="1.200" y="2.200" width="3.600" height="3.600" rx=".6"/><rect x="15.200" y="2.200" width="3.600" height="3.600" rx=".6"/><rect x="8.200" y="14.400" width="3.600" height="3.600" rx=".6"/></g></svg>
<svg class="a" style="left:1523.0px;top:90.0px;" width="20" height="16" viewBox="0 0 20 16"><path d="M1 8C4 3 7.200 1.600 10 1.600C12.800 1.600 16 3 19 8C16 13 12.800 14.400 10 14.400C7.200 14.400 4 13 1 8Z" fill="#e6e6e6"/><circle cx="10" cy="8" r="4.300" fill="#282828"/><circle cx="10" cy="8" r="2.100" fill="#e6e6e6"/></svg>
<svg class="a" style="left:1548.2px;top:89.4px;" width="18.6" height="16.8" viewBox="0 0 20 18"><path d="M1 4.600H5L6.400 1.800H13.600L15 4.600H19V16H1Z" fill="#e6e6e6" stroke="#e6e6e6" stroke-width="1" stroke-linejoin="round"/><circle cx="10" cy="9.800" r="4.700" fill="none" stroke="#282828" stroke-width="1.300"/><circle cx="10" cy="9.800" r="2.300" fill="none" stroke="#282828" stroke-width="1.200"/></svg>
<svg class="a" style="left:1283.0px;top:116.0px;" width="10" height="14" viewBox="0 0 10 14"><path d="M1.5 1.5L7.6 7L1.5 12.5" fill="none" stroke="#e0e0e0" stroke-width="1.3" stroke-linecap="round" stroke-linejoin="round"/></svg>
<div class="a" style="left:1300.0px;top:111.4px;width:24.8px;height:23.0px;background:rgba(255,255,255,.2);border-radius:5px;border:1px solid rgba(255,255,255,.12);"></div>
<svg class="a" style="left:1302.0px;top:113.0px;" width="20" height="20" viewBox="0 0 20 20"><path d="M5.4 3.4C10.6 1.200 16.4 3.400 16.400 9C16.400 14.800 9.400 16.400 3.400 16.800" fill="none" stroke="#e39a5c" stroke-width="3.6" stroke-linecap="round"/></svg>
<span class="t" style="left:1330.2px;top:124.0px;color:#f5a623;letter-spacing:-0.37px;">Plane.001</span>
<svg class="a" style="left:1425.0px;top:113.0px;" width="20" height="20" viewBox="0 0 20 20"><path d="M12.8 2.200A4.600 4.600 0 0 0 9.300 8.800L2.500 15.100A1.700 1.700 0 0 0 5 17.600L11.600 11.200A4.600 4.600 0 0 0 17.800 6.600L15 9L12.400 8.400L11.800 5.600Z" fill="none" stroke="#6b98e6" stroke-width="1.4" stroke-linejoin="round"/></svg>
<svg class="a" style="left:1449.4px;top:111.7px;" width="22.8" height="22.8" viewBox="0 0 20 20"><g fill="none" stroke="#1fc7a5" stroke-width="1.2"><rect x="4.7" y="2.6" width="3.6" height="3.6" rx=".6"/><rect x="1.4" y="12.6" width="3.6" height="3.6" rx=".6"/><path d="M8.3 4.2C14 3.4 16.8 6.8 15.6 10.4C14.6 13.4 10 14.6 5 14.4"/></g></svg>
<svg class="a" style="left:1523.0px;top:115.0px;" width="20" height="16" viewBox="0 0 20 16"><path d="M1 8C4 3 7.200 1.600 10 1.600C12.800 1.600 16 3 19 8C16 13 12.800 14.400 10 14.400C7.200 14.400 4 13 1 8Z" fill="#e6e6e6"/><circle cx="10" cy="8" r="4.300" fill="#282828"/><circle cx="10" cy="8" r="2.100" fill="#e6e6e6"/></svg>
<svg class="a" style="left:1548.2px;top:114.4px;" width="18.6" height="16.8" viewBox="0 0 20 18"><path d="M1 4.600H5L6.400 1.800H13.600L15 4.600H19V16H1Z" fill="#e6e6e6" stroke="#e6e6e6" stroke-width="1" stroke-linejoin="round"/><circle cx="10" cy="9.800" r="4.700" fill="none" stroke="#282828" stroke-width="1.300"/><circle cx="10" cy="9.800" r="2.300" fill="none" stroke="#282828" stroke-width="1.200"/></svg>
<div class="a" style="left:1250.0px;top:150.7px;width:329.6px;height:765.3px;background:#303030;border-radius:6px;"></div>
<div class="a" style="left:1250.0px;top:181.8px;width:34.8px;height:734.2px;background:#1d1d1d;"></div>
<div class="a" style="left:1250.0px;top:181.8px;width:34.8px;height:45.3px;background:#222;border-radius:0 0 0 5px;"></div>
<div class="a" style="left:1260.5px;top:154.5px;width:38.9px;height:24.2px;background:#2b2b2b;border-radius:5px;border:1px solid #3c3c3c;"></div>
<svg class="a" style="left:1264.0px;top:156.0px;" width="22" height="22" viewBox="0 0 22 22"><g><rect x="2.200" y="2.600" width="17.400" height="7.200" rx="3.600" fill="#ececec"/><rect x="11.400" y="4.400" width="6.400" height="3.600" rx="1.800" fill="#2b2b2b"/><rect x="2.200" y="12.200" width="17.400" height="7.200" rx="3.600" fill="#ececec"/><rect x="11.400" y="14" width="6.400" height="3.600" rx="1.800" fill="#2b2b2b"/></g></svg>
<svg class="a" style="left:1286.0px;top:163.4px" width="11.4" height="7.8"><path d="M2 2 L5.7 5.8 L9.4 2" fill="none" stroke="#e0e0e0" stroke-width="1.2" stroke-linecap="round" stroke-linejoin="round"/></svg>
<div class="a" style="left:1336.7px;top:154.5px;width:146.7px;height:24.2px;background:#1d1d1d;border-radius:5px;border:1px solid #3c3c3c;"></div>
<svg class="a" style="left:1340.0px;top:157.0px;" width="24" height="22" viewBox="0 0 24 22"><g fill="none" stroke="#e0e0e0" stroke-width="1.5" stroke-linecap="round"><circle cx="13.900" cy="8.800" r="5.700"/><path d="M9.800 13L3.200 18.200"/></g></svg>
<span class="t" style="left:1369.3px;top:165.4px;color:#6a6a6a;letter-spacing:-0.69px;">Search</span>
<div class="a" style="left:1546.5px;top:154.5px;width:23.5px;height:24.2px;background:#2b2b2b;border-radius:5px;border:1px solid #3c3c3c;"></div>
<svg class="a" style="left:1552.5px;top:163.1px" width="11.6" height="7.9"><path d="M2 2 L5.8 5.9 L9.6 2" fill="none" stroke="#e0e0e0" stroke-width="1.2" stroke-linecap="round" stroke-linejoin="round"/></svg>
<svg class="a" style="left:1256.8px;top:198.6px;" width="22" height="22" viewBox="0 0 22 22"><g fill="none" stroke="#b4b4b4" stroke-width="1.500" stroke-linecap="round"><path d="M5 2.600V13"/><path d="M3.200 13.400H6.800V16.800A1.800 1.800 0 0 1 3.200 16.800Z" fill="#b4b4b4"/><path d="M12.600 2.600V6.200A2.800 2.800 0 0 0 18.200 6.200V2.600" stroke-width="2"/><path d="M15.400 9V17.800" stroke-width="2.600"/></g></svg>
<svg class="a" style="left:1256.8px;top:241.8px;" width="22" height="22" viewBox="0 0 22 22"><g><rect x="2.400" y="6.200" width="17.400" height="12.400" rx="1.600" fill="#b4b4b4"/><path d="M6.600 6.400V3.800H14V6.400" fill="none" stroke="#b4b4b4" stroke-width="1.700"/><path d="M4.800 9.600H14.200M4.800 12.200H14.200M4.800 14.800H14.200" stroke="#1c1c1c" stroke-width="1.100"/><circle cx="17" cy="10" r="1" fill="#1c1c1c"/><circle cx="17" cy="14.600" r="1" fill="#1c1c1c"/></g></svg>
<svg class="a" style="left:1256.8px;top:277.6px;" width="22" height="22" viewBox="0 0 22 22"><g fill="#b4b4b4"><path d="M3 3.600H19V10.800H3Z"/><path d="M5.600 12H16.400V18.600H5.600Z" fill="none" stroke="#b4b4b4" stroke-width="1.400"/><path d="M8 17.400L11 13.600L14 17.400Z"/></g></svg>
<svg class="a" style="left:1256.8px;top:312.4px;" width="22" height="22" viewBox="0 0 22 22"><g fill="none" stroke="#b4b4b4" stroke-width="1.300"><path d="M3 6.600V18.600H15"/><path d="M5.400 4.600V16.400H17.400"/><rect x="7.800" y="2.800" width="11.400" height="11.400" fill="#b4b4b4" stroke="none"/><path d="M9.400 12.600L12.800 7.400L16.400 12.600Z" fill="#1c1c1c" stroke="none"/><circle cx="16.400" cy="5.800" r="1.100" fill="#1c1c1c" stroke="none"/></g></svg>
<svg class="a" style="left:1256.8px;top:347.6px;" width="22" height="22" viewBox="0 0 22 22"><g fill="#b4b4b4"><path d="M6.800 3.600L10.800 12.200A4.200 4.200 0 1 1 2.800 12.200Z"/><circle cx="15.400" cy="5.800" r="2.400"/><circle cx="14.800" cy="14.600" r="3.400" fill="none" stroke="#b4b4b4" stroke-width="1.400"/><circle cx="14.800" cy="14.600" r="1" /></g></svg>
<svg class="a" style="left:1256.8px;top:382.6px;" width="22" height="22" viewBox="0 0 22 22"><g fill="none" stroke="#b84c5a" stroke-width="1.600" stroke-linecap="round"><circle cx="11" cy="11" r="7.200"/><path d="M5.600 7.400C9 8.400 9.600 10.600 8.200 12.800C7.600 14.400 9 16 10 17.800M13.600 4.600C12.600 6.600 14.600 8 17.400 8.600"/><path d="M2.400 15.600L4.600 17.800M17.400 4.200L19.600 6.400" /></g></svg>
<svg class="a" style="left:1256.8px;top:427.0px;" width="22" height="22" viewBox="0 0 22 22"><g><rect x="5.600" y="5.600" width="10.800" height="10.800" fill="#e1935a"/><path d="M2.600 6.400V2.600H6.400M15.600 2.600H19.400V6.400M19.400 15.600V19.400H15.600M6.400 19.400H2.600V15.600" fill="none" stroke="#9a6840" stroke-width="1.500"/></g></svg>
<div class="a" style="left:1252.4px;top:456.5px;width:32.4px;height:33.5px;background:#303030;border-radius:5px 0 0 5px;"></div>
<svg class="a" style="left:1257.0px;top:462.5px;" width="22" height="22" viewBox="0 0 22 22"><path d="M14.200 1.800A5.400 5.400 0 0 0 10 9.400L2.400 16.600A2 2 0 0 0 5.400 19.600L12.600 12A5.400 5.400 0 0 0 20.200 7.200L17 10L14 9.200L13.200 6.200Z" fill="#6a9cf0"/></svg>
<svg class="a" style="left:1256.8px;top:497.0px;" width="22" height="22" viewBox="0 0 22 22"><g fill="none" stroke="#6f9ae8" stroke-width="1.500" stroke-linecap="round"><path d="M15.600 15.400A6.600 6.600 0 1 1 14.800 5.400"/><circle cx="10.600" cy="10.800" r="2.400" fill="#6f9ae8" stroke="none"/><circle cx="17" cy="4.800" r="1.700" fill="#6f9ae8" stroke="none"/></g></svg>
<svg class="a" style="left:1256.8px;top:532.0px;" width="22" height="22" viewBox="0 0 22 22"><g fill="none" stroke="#6f9ae8" stroke-width="1.500" stroke-linejoin="round"><path d="M16.200 2.800C19 2.400 19.600 4.400 18.800 6.400L15.600 14.600C13.600 19.400 7.400 20 4.400 16.400C1.600 13 3.200 8.200 7.200 6.600Z"/><circle cx="9.400" cy="12.400" r="3.400"/><circle cx="9.400" cy="12.400" r="1" fill="#6f9ae8"/></g></svg>
<svg class="a" style="left:1256.8px;top:567.0px;" width="22" height="22" viewBox="0 0 22 22"><g fill="none" stroke="#1fc79a" stroke-width="1.400"><rect x="7" y="2.800" width="3.600" height="3.600" rx=".6"/><rect x="2.600" y="14.400" width="3.600" height="3.600" rx=".6"/><path d="M10.600 4.600C16.400 4 19.400 7.600 18 11.600C16.800 15 12 16.400 6.200 16.200"/></g></svg>
<svg class="a" style="left:1256.8px;top:602.0px;" width="22" height="22" viewBox="0 0 22 22"><g><circle cx="11" cy="11" r="8" fill="#b85a64" stroke="#b85a64" stroke-width="1.400"/><path d="M11.300 11.800V3A8 8 0 0 1 18.600 9.600Q15 12 11.300 11.800Z" fill="#1c1c1c"/><path d="M10.700 12V19A8 8 0 0 1 3.800 12.400Q7 12.600 10.700 14Z" fill="#1c1c1c"/></g></svg>
<div class="a" style="left:1252.0px;top:630.0px;width:32.8px;height:1.2px;background:#141414;"></div>
<div class="a" style="left:1249.9px;top:190.0px;width:1.0px;height:726.0px;background:#2c2c2c;"></div>
<svg class="a" style="left:1297.0px;top:194.8px;" width="20" height="20" viewBox="0 0 20 20"><g><rect x="5" y="5" width="10" height="10" fill="#e6e6e6"/><path d="M1.600 5.600V1.600H5.600M14.400 1.600H18.400V5.600M18.400 14.400V18.400H14.400M5.600 18.400H1.600V14.400" fill="none" stroke="#9a9a9a" stroke-width="1.300"/></g></svg>
<span class="t" style="left:1328.4px;top:203.9px;letter-spacing:-0.35px;">Plane.001</span>
<svg class="a" style="left:1404.6px;top:198.8px;" width="10" height="13" viewBox="0 0 10 13"><path d="M2 1.500L7.600 6.600L2 11.700" fill="none" stroke="#dcdcdc" stroke-width="1.300" stroke-linecap="round" stroke-linejoin="round"/></svg>
<svg class="a" style="left:1424.4px;top:194.6px;" width="20" height="20" viewBox="0 0 20 20"><g fill="none" stroke="#dcdcdc" stroke-width="1.300"><rect x="1" y="1" width="17.600" height="17.600" rx="1" stroke="#8c8c8c"/><circle cx="9.800" cy="9.800" r="5.800"/></g></svg>
<span class="t" style="left:1455.2px;top:203.9px;letter-spacing:-0.63px;">Subdivision</span>
<svg class="a" style="left:1549.0px;top:193.0px;" width="22" height="22" viewBox="0 0 22 22"><g fill="none" stroke="#a8a8a8" stroke-width="1.400" stroke-linejoin="round" stroke-linecap="round"><path d="M12.400 2.600L19.400 9.600L17.200 10.400L14.200 13.400L13.600 17L5 8.400L8.600 7.800L11.600 4.800Z"/><path d="M9 13L2.600 19.400"/></g></svg>
<div class="a" style="left:1295.6px;top:237.9px;width:276.2px;height:23.5px;background:#545454;border-radius:4.5px;"></div>
<svg class="a" style="left:1303.2px;top:243.0px;" width="14" height="14" viewBox="0 0 14 14"><path d="M7 1.200V12.800M1.200 7H12.800" stroke="#e6e6e6" stroke-width="1.400" fill="none"/></svg>
<span class="t" style="left:1403.9px;top:248.4px;letter-spacing:-0.50px;text-shadow:0 1px 1px rgba(0,0,0,.35);">Add Modifier</span>
<div class="a" style="left:1295.3px;top:273.8px;width:276.9px;height:193.7px;background:#3d3d3d;border-radius:5.5px;border:1.3px solid #4772b3;"></div>
<svg class="a" style="left:1303.7px;top:286.2px" width="14.4" height="9.4"><path d="M2 2 L7.2 7.4 L12.4 2" fill="none" stroke="#dcdcdc" stroke-width="1.3" stroke-linecap="round" stroke-linejoin="round"/></svg>
<svg class="a" style="left:1322.2px;top:281.2px;" width="20" height="20" viewBox="0 0 20 20"><g fill="none" stroke="#dcdcdc" stroke-width="1.300"><rect x="1" y="1" width="17.600" height="17.600" rx="1" stroke="#8c8c8c"/><circle cx="9.800" cy="9.800" r="5.800"/></g></svg>
<div class="a" style="left:1356.1px;top:279.3px;width:53.5px;height:22.6px;background:#1d1d1d;border-radius:4px 0 0 4px;"></div>
<span class="t" style="left:1365.3px;top:289.6px;letter-spacing:-0.75px;">Sub...</span>
<div class="a" style="left:1410.1px;top:279.3px;width:24.2px;height:22.6px;background:#4772b3;"></div>
<div class="a" style="left:1434.9px;top:279.3px;width:24.3px;height:22.6px;background:#4772b3;"></div>
<div class="a" style="left:1459.8px;top:279.3px;width:24.5px;height:22.6px;background:#4772b3;"></div>
<div class="a" style="left:1484.8px;top:279.3px;width:24.4px;height:22.6px;background:#1d1d1d;border-radius:0 4px 4px 0;"></div>
<svg class="a" style="left:1412.0px;top:281.0px;" width="20" height="20" viewBox="0 0 20 20"><g fill="none" stroke="#f0f0f0" stroke-width="1.300"><path d="M4.400 4.800H12M4.400 15.400H15.400M3.600 5.600V14.600M16.200 8V14.600"/><rect x="1.800" y="3" width="3.400" height="3.400" rx=".6"/><rect x="1.800" y="13.600" width="3.400" height="3.400" rx=".6"/><rect x="14.400" y="13.600" width="3.400" height="3.400" rx=".6"/><rect x="13.600" y="1.400" width="5.200" height="5.200" rx=".8" fill="#f0f0f0"/></g></svg>
<svg class="a" style="left:1437.0px;top:281.0px;" width="20" height="20" viewBox="0 0 20 20"><g fill="none" stroke="#f0f0f0" stroke-width="1.400"><rect x="2.200" y="3" width="15.800" height="10.600" rx="1"/><rect x="4" y="4.800" width="12.200" height="7" fill="#f0f0f0" stroke="none"/><path d="M10 13.600V16.600M6 17H14.200"/></g></svg>
<svg class="a" style="left:1462.0px;top:281.0px;" width="20" height="20" viewBox="0 0 20 20"><path d="M1.600 5.600H5.400L6.800 2.800H13.600L15 5.600H18.800V16.800H1.600Z" fill="#f0f0f0"/><circle cx="10.200" cy="10.600" r="4.400" fill="none" stroke="#4772b3" stroke-width="1.300"/><circle cx="10.200" cy="10.600" r="2.100" fill="none" stroke="#4772b3" stroke-width="1.200"/></svg>
<svg class="a" style="left:1489.8px;top:286.2px" width="14.6" height="9.0"><path d="M2 2 L7.3 7.0 L12.6 2" fill="none" stroke="#e6e6e6" stroke-width="1.4" stroke-linecap="round" stroke-linejoin="round"/></svg>
<svg class="a" style="left:1516.0px;top:284.5px;" width="13" height="13" viewBox="0 0 13 13"><path d="M1.800 1.800L11 11M11 1.800L1.800 11" stroke="#e0e0e0" stroke-width="1.400" fill="none" stroke-linecap="round"/></svg>
<svg class="a" style="left:1549.0px;top:286.5px;" width="16" height="8" viewBox="0 0 16 8"><rect x="0.0" y="0.0" width="1.900" height="1.900" fill="#b4b4b4"/><rect x="0.0" y="3.7" width="1.900" height="1.900" fill="#b4b4b4"/><rect x="3.7" y="0.0" width="1.900" height="1.900" fill="#b4b4b4"/><rect x="3.7" y="3.7" width="1.900" height="1.900" fill="#b4b4b4"/><rect x="7.4" y="0.0" width="1.900" height="1.900" fill="#b4b4b4"/><rect x="7.4" y="3.7" width="1.900" height="1.900" fill="#b4b4b4"/><rect x="11.1" y="0.0" width="1.900" height="1.900" fill="#b4b4b4"/><rect x="11.1" y="3.7" width="1.900" height="1.900" fill="#b4b4b4"/></svg>
<div class="a" style="left:1305.9px;top:316.3px;width:126.2px;height:22.7px;background:#4772b3;border-radius:4px 0 0 4px;"></div>
<div class="a" style="left:1432.7px;top:316.3px;width:128.3px;height:22.7px;background:#545454;border-radius:0 4px 4px 0;"></div>
<span class="t" style="left:1321.4px;top:327.0px;color:#fff;letter-spacing:0.03px;text-shadow:0 1px 1px rgba(0,0,0,.45);">Catmull-Clark</span>
<span class="t" style="left:1474.8px;top:327.0px;letter-spacing:-0.63px;text-shadow:0 1px 1px rgba(0,0,0,.35);">Simple</span>
<span class="t" style="left:1312.8px;top:357.9px;letter-spacing:-0.43px;">Levels Vie...</span>
<span class="t" style="left:1345.3px;top:382.8px;letter-spacing:-0.87px;">Render</span>
<div class="a" style="left:1403.9px;top:347.1px;width:132.2px;height:23.3px;background:#545454;border-radius:4px 4px 0 0;"></div>
<div class="a" style="left:1403.9px;top:371.4px;width:132.2px;height:24.0px;background:#545454;border-radius:0 0 4px 4px;"></div>
<span class="t" style="left:1465.3px;top:357.9px;letter-spacing:-0.50px;">2</span>
<span class="t" style="left:1465.3px;top:382.8px;letter-spacing:-0.50px;">2</span>
<div class="a" style="left:1546.8px;top:356.3px;width:5.0px;height:5.0px;background:#dcdcdc;border-radius:50%;"></div>
<div class="a" style="left:1546.8px;top:381.4px;width:5.0px;height:5.0px;background:#dcdcdc;border-radius:50%;"></div>
<div class="a" style="left:1546.8px;top:412.5px;width:5.0px;height:5.0px;background:#dcdcdc;border-radius:50%;"></div>
<div class="a" style="left:1403.9px;top:406.1px;width:17.2px;height:17.0px;background:#4772b3;border-radius:3.5px;"></div>
<svg class="a" style="left:1404.0px;top:406.0px;" width="17" height="17" viewBox="0 0 17 17"><path d="M4 8.800L7.200 12L13.200 4.800" fill="none" stroke="#fff" stroke-width="2" stroke-linecap="round" stroke-linejoin="round"/></svg>
<span class="t" style="left:1425.5px;top:413.6px;letter-spacing:-0.44px;">Optimal Display</span>
<svg class="a" style="left:1323.5px;top:446.5px;" width="10" height="13" viewBox="0 0 10 13"><path d="M2 1.800L7.800 6.600L2 11.400" fill="none" stroke="#dcdcdc" stroke-width="1.300" stroke-linecap="round" stroke-linejoin="round"/></svg>
<span class="t" style="left:1339.6px;top:452.6px;letter-spacing:-0.56px;">Advanced</span>
</div>
</body>
</html>
